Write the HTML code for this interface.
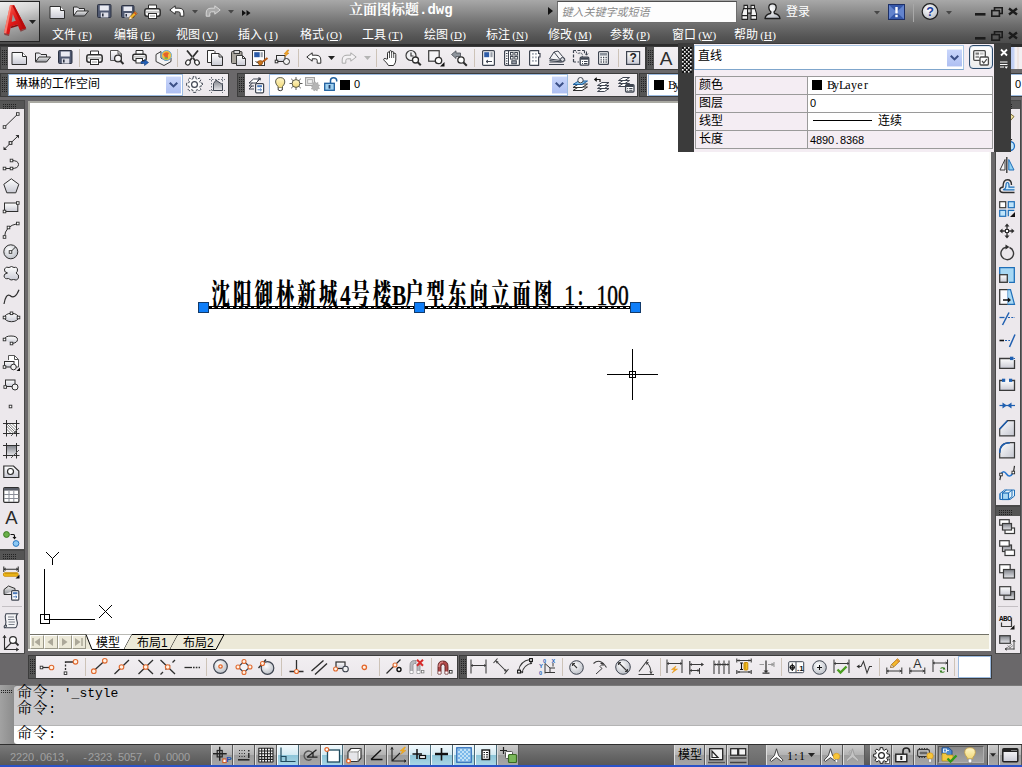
<!DOCTYPE html>
<html lang="zh"><head><meta charset="utf-8"><title>AutoCAD</title><style>
html,body{margin:0;padding:0}
html{background:#6a686a}
#root{left:0;top:0;width:1022px;height:767px}
body{width:1022px;height:767px;position:relative;overflow:hidden;background:#6a686a;font-family:"Liberation Sans","Noto Sans CJK SC",sans-serif;font-size:12px;color:#000}
div,span,svg{position:absolute;box-sizing:border-box}
svg{overflow:visible}
span{white-space:nowrap;line-height:1}
span b{display:inline-block;font-weight:normal;text-align:center;position:static}
.cj{letter-spacing:0.6px;font-size:15px;line-height:13px}
.tb{background:linear-gradient(#f2eff2,#ebe7eb);box-shadow:0 0 0 1px #3c3c3c}
.gh{background:#555;}
.gv{background-image:repeating-linear-gradient(0deg,#2a2a2a 0 1px,transparent 1px 2px),repeating-linear-gradient(90deg,#2a2a2a 0 1px,transparent 1px 2px);background-blend-mode:normal}
.mn{color:#fff;font-size:12px;font-family:"Liberation Sans","Noto Sans CJK SC",sans-serif}
.mn i{font-style:normal;font-family:"Liberation Serif",serif;font-size:11px;margin-left:2px}
.sep{background:#cdc3b8;width:1px}
.cmd{font-family:"Liberation Mono","Noto Serif CJK SC",monospace;font-size:13px;color:#000}
.sb{border-left:1px solid #dedede;border-right:1px solid #5a5a5a;background:linear-gradient(#cdcdcd,#b2b2b2 50%,#9d9d9d 52%,#a6a6a6)}
.sbon{border-left:1px solid #f4fbff;border-right:1px solid #4a6a78;background:linear-gradient(#f2f9fc,#d4ebf3 48%,#8ec6d9 52%,#a9d6e4)}
.qp{font-family:"Liberation Sans","Noto Sans CJK SC",sans-serif;font-size:12px}
</style></head><body><div id="root">
<svg width="0" height="0" style="left:0;top:0"><defs>
<linearGradient id="gL" x1="0" y1="0" x2="0" y2="1"><stop offset="0" stop-color="#ffffff"/><stop offset="1" stop-color="#c9cad4"/></linearGradient>
<linearGradient id="gL2" x1="0" y1="0" x2="1" y2="1"><stop offset="0" stop-color="#ffffff"/><stop offset="1" stop-color="#c4c6d0"/></linearGradient>
<linearGradient id="gD" x1="0" y1="0" x2="0" y2="1"><stop offset="0" stop-color="#f0f0f0"/><stop offset="1" stop-color="#8e9096"/></linearGradient>
<linearGradient id="gDr" x1="0" y1="0" x2="0" y2="1"><stop offset="0" stop-color="#7d8087"/><stop offset="1" stop-color="#e6e6ea"/></linearGradient>
<linearGradient id="gB" x1="0" y1="0" x2="0" y2="1"><stop offset="0" stop-color="#d8eefa"/><stop offset="1" stop-color="#8cc4e6"/></linearGradient>
<linearGradient id="gCb" x1="0" y1="0" x2="0" y2="1"><stop offset="0" stop-color="#c9d6fb"/><stop offset="1" stop-color="#aebff2"/></linearGradient>
<linearGradient id="gY" x1="0" y1="0" x2="0" y2="1"><stop offset="0" stop-color="#fff6c8"/><stop offset="1" stop-color="#f0d878"/></linearGradient>
<linearGradient id="gApp" x1="0" y1="0" x2="1" y2="1"><stop offset="0" stop-color="#ff6a5a"/><stop offset="0.5" stop-color="#e01818"/><stop offset="1" stop-color="#a80808"/></linearGradient>
<radialGradient id="gSph" cx="0.4" cy="0.35" r="0.7"><stop offset="0" stop-color="#ffffff"/><stop offset="1" stop-color="#b8bcc4"/></radialGradient>
</defs></svg>
<div style="left:0px;top:0px;width:1022px;height:44px;background:linear-gradient(#a8a8a8,#8e8e8e 25%,#6e6e6e 55%,#545454 85%,#4a4a4a)"></div>
<div style="left:0px;top:44px;width:1022px;height:3px;background:#2c2c2c"></div>
<div style="left:0px;top:1px;width:40px;height:41px;background:linear-gradient(165deg,#f0f0f0,#d4d4d4 30%,#a2a2a2 60%,#767676);border:1px solid #242424;border-left:none"></div>
<svg style="left:1px;top:3px" width="30" height="34" viewBox="0 0 30 34"><path d="M9 2L13 2L25 25L19 27.5L16.5 21.5L9.8 23.5L8.3 31.5L3 30Z" fill="url(#gApp)"/>
<path d="M9 2L10.6 2.4L5.2 30.6L3 30Z" fill="#ff9a8a" opacity=".75"/>
<path d="M11.8 11L14.8 17.8L10.6 19Z" fill="#9a9a9a"/>
<path d="M13 2L25 25L22.5 26L11.5 3Z" fill="#b80c0c"/>
<path d="M9.8 23.5L16.5 21.5L17.2 23L9.5 25.2Z" fill="#8e0a0a"/>
<path d="M3 30L8.3 31.5L8 33L3.5 32Z" fill="#7a0808" opacity=".6"/><path d="M19 27.5L25 25L25.3 26.2L19.6 28.8Z" fill="#7a0808" opacity=".6"/></svg>
<svg style="left:29px;top:20px" width="7" height="4" viewBox="0 0 7 4"><path d="M0 0H7L3.5 4Z" fill="#222"/></svg>
<svg style="left:49px;top:5px" width="17" height="15" viewBox="0 0 17 15"><path d="M1 1.5H11.5L15.5 5.5V13.5H1Z" fill="url(#gL)" stroke="#2e2e2e"/><path d="M11.5 1.5V5.5H15.5" fill="#fff" stroke="#2e2e2e"/></svg>
<svg style="left:72px;top:5px" width="18" height="13" viewBox="0 0 18 13"><path d="M1.5 10.5V2H5.5L7 3.5H12.5V6" fill="#e8e8ec" stroke="#2e2e2e"/><path d="M1.5 11L5 6H16.5L12.5 11Z" fill="url(#gD)" stroke="#2e2e2e"/></svg>
<svg style="left:97px;top:4px" width="15" height="14" viewBox="0 0 15 14"><rect x="0.5" y="0.5" width="13.5" height="13" rx="1" fill="#4f5870" stroke="#2c3242"/><rect x="2.8" y="1.5" width="9" height="5" fill="#e9eaf2"/><rect x="3.8" y="8.5" width="7.5" height="5" fill="#dcdde6"/><rect x="5" y="9.5" width="1.6" height="3" fill="#2c3242"/></svg>
<svg style="left:121px;top:5px" width="17" height="15" viewBox="0 0 17 15"><rect x="0.5" y="0.5" width="12.5" height="12" rx="1" fill="#4f5870" stroke="#2c3242"/><rect x="2.5" y="1.5" width="8.5" height="4.5" fill="#e9eaf2"/><rect x="3.5" y="8" width="7" height="4.5" fill="#dcdde6"/><rect x="4.5" y="9" width="1.5" height="2.6" fill="#2c3242"/><path d="M8 14.5L9 11.5L14 6.5L16 8.5L11 13.5Z" fill="#f2b52c" stroke="#7a4a10" stroke-width=".7"/><path d="M8 14.5L9 11.5L11 13.5Z" fill="#f6e6c8"/><path d="M13.2 7.3L15.2 9.3" stroke="#d04020" stroke-width="1.2"/></svg>
<svg style="left:144px;top:4px" width="17" height="15" viewBox="0 0 17 15"><path d="M4.5 5V1H12.5V5" fill="#fff" stroke="#2e2e2e"/><rect x="0.8" y="4.8" width="15.4" height="7.4" rx="2.2" fill="#f4f4f4" stroke="#2e2e2e" stroke-width="1.5"/><rect x="2" y="7" width="13" height="2" fill="#c8c8c8"/><rect x="4.5" y="9.5" width="8" height="5" fill="#fff" stroke="#2e2e2e"/><rect x="6" y="11.5" width="5" height="1" fill="#9a9a9a"/></svg>
<svg style="left:169px;top:5px" width="16" height="12" viewBox="0 0 16 12"><path d="M0.8 5L6.2 0.8V3.2H10Q14.8 3.2 14.8 8V11.2H11.2V8.6Q11.2 6.8 9.5 6.8H6.2V9.2Z" fill="#fff" stroke="#2e2e2e" stroke-linejoin="round"/></svg>
<svg style="left:205px;top:5px" width="16" height="12" viewBox="0 0 16 12"><g transform="translate(16 0) scale(-1 1)"><path d="M0.8 5L6.2 0.8V3.2H10Q14.8 3.2 14.8 8V11.2H11.2V8.6Q11.2 6.8 9.5 6.8H6.2V9.2Z" fill="#a9a9a9" stroke="#d6d6d6" stroke-linejoin="round"/></g></svg>
<svg style="left:192px;top:10px" width="6" height="4" viewBox="0 0 6 4"><path d="M0 0H6L3 3.5Z" fill="#474747"/></svg>
<svg style="left:228px;top:10px" width="6" height="4" viewBox="0 0 6 4"><path d="M0 0H6L3 3.5Z" fill="#474747"/></svg>
<svg style="left:242px;top:10px" width="9" height="6" viewBox="0 0 9 6"><path d="M0 0L4 3L0 6ZM4.5 0L8.5 3L4.5 6Z" fill="#111"/></svg>
<span style="left:349px;top:3px;color:#fff;font-weight:bold;font-size:14px;font-family:'Liberation Mono','Noto Serif CJK SC',serif">立面图标题.dwg</span>
<svg style="left:548px;top:7px" width="5" height="8" viewBox="0 0 5 8"><path d="M0 0L5 4L0 8Z" fill="#111"/></svg>
<div style="left:557px;top:1px;width:180px;height:22px;background:#fdfdfd;border:1px solid #6e6e6e;border-top-color:#4e4e4e"></div>
<span style="left:561px;top:7px;color:#8a8a8a;font-size:11px;transform:skewX(-14deg);transform-origin:0 100%">键入关键字或短语</span>
<svg style="left:741px;top:5px" width="17" height="15" viewBox="0 0 17 15"><g transform="translate(0 -2.7) scale(1 1.27)"><path d="M3 2.5H6.5V6H3ZM10 2.5H13.5V6H10Z" fill="#e8e8e8" stroke="#222"/><path d="M2.5 5L1 9V13.5H6.5V9L6.5 5ZM10 5V13.5H15.5V9L14 5Z" fill="#f4f4f4" stroke="#222"/><rect x="6.5" y="5" width="3.5" height="3.5" fill="#ccc" stroke="#222"/><path d="M1 10.5H6.5M10 10.5H15.5" stroke="#222"/></g></svg>
<svg style="left:764px;top:3px" width="18" height="17" viewBox="0 0 18 17"><path d="M1 15.5Q1.5 11.5 6.5 10.5L7 9Q4.8 7 4.8 4.5Q4.8 0.8 8.5 0.8Q12.2 0.8 12.2 4.5Q12.2 7 10 9L10.5 10.5Q15.5 11.5 16 15.5Z" fill="url(#gSph)" stroke="#1e1e1e" stroke-width="1.3" stroke-linejoin="round"/></svg>
<span style="left:786px;top:6px;color:#fff;font-size:12px">登录</span>
<svg style="left:874px;top:11px" width="6" height="4" viewBox="0 0 6 4"><path d="M0 0H6L3 3.5Z" fill="#474747"/></svg>
<svg style="left:888px;top:4px" width="17" height="16" viewBox="0 0 17 16"><rect x="0.5" y="0.5" width="16" height="15" fill="#3557a8" stroke="#1d2f66"/><path d="M1 1L8.5 8L1 15ZM16 1L8.5 8L16 15Z" fill="#6e8ed6" opacity=".8"/><rect x="7.3" y="3" width="2.4" height="6.5" fill="#fff"/><rect x="7.3" y="10.8" width="2.4" height="2.4" fill="#fff"/></svg>
<div style="left:913px;top:4px;width:1px;height:18px;background:#a8a8a8"></div>
<svg style="left:921px;top:3px" width="18" height="17" viewBox="0 0 18 17"><circle cx="9" cy="8.5" r="7.8" fill="url(#gSph)" stroke="#1e1e1e" stroke-width="1.2"/><text x="9" y="13" text-anchor="middle" font-family="'Liberation Sans',sans-serif" font-weight="bold" font-size="12.5" fill="#1c3f9e">?</text></svg>
<svg style="left:946px;top:11px" width="6" height="4" viewBox="0 0 6 4"><path d="M0 0H6L3 3.5Z" fill="#474747"/></svg>
<svg style="left:975px;top:13px" width="11" height="3" viewBox="0 0 11 3"><rect width="10.5" height="2.6" fill="#1c1c1c"/></svg>
<svg style="left:991px;top:7px" width="12" height="10" viewBox="0 0 12 10"><path d="M3.5 3V0.8H11.2V6.5H9" fill="none" stroke="#1c1c1c" stroke-width="1.6"/><rect x="0.8" y="3.6" width="7.6" height="5.6" fill="none" stroke="#1c1c1c" stroke-width="1.6"/></svg>
<svg style="left:1008px;top:8px" width="10" height="7" viewBox="0 0 10 7"><path d="M1 0.5L9 6.5M9 0.5L1 6.5" stroke="#1c1c1c" stroke-width="2.4"/></svg>
<svg style="left:975px;top:37px" width="11" height="3" viewBox="0 0 11 3"><rect width="10.5" height="2.6" fill="#1c1c1c"/></svg>
<svg style="left:991px;top:31px" width="12" height="10" viewBox="0 0 12 10"><path d="M3.5 3V0.8H11.2V6.5H9" fill="none" stroke="#1c1c1c" stroke-width="1.6"/><rect x="0.8" y="3.6" width="7.6" height="5.6" fill="none" stroke="#1c1c1c" stroke-width="1.6"/></svg>
<svg style="left:1008px;top:32px" width="10" height="7" viewBox="0 0 10 7"><path d="M1 0.5L9 6.5M9 0.5L1 6.5" stroke="#1c1c1c" stroke-width="2.4"/></svg>
<span class="mn" style="left:52px;top:29px;">文件<i><b style="width:4px">(</b><b style="min-width:6px;text-decoration:underline">F</b><b style="width:4px">)</b></i></span>
<span class="mn" style="left:114px;top:29px;">编辑<i><b style="width:4px">(</b><b style="min-width:6px;text-decoration:underline">E</b><b style="width:4px">)</b></i></span>
<span class="mn" style="left:176px;top:29px;">视图<i><b style="width:4px">(</b><b style="min-width:6px;text-decoration:underline">V</b><b style="width:4px">)</b></i></span>
<span class="mn" style="left:238px;top:29px;">插入<i><b style="width:4px">(</b><b style="min-width:6px;text-decoration:underline">I</b><b style="width:4px">)</b></i></span>
<span class="mn" style="left:300px;top:29px;">格式<i><b style="width:4px">(</b><b style="min-width:6px;text-decoration:underline">O</b><b style="width:4px">)</b></i></span>
<span class="mn" style="left:362px;top:29px;">工具<i><b style="width:4px">(</b><b style="min-width:6px;text-decoration:underline">T</b><b style="width:4px">)</b></i></span>
<span class="mn" style="left:424px;top:29px;">绘图<i><b style="width:4px">(</b><b style="min-width:6px;text-decoration:underline">D</b><b style="width:4px">)</b></i></span>
<span class="mn" style="left:486px;top:29px;">标注<i><b style="width:4px">(</b><b style="min-width:6px;text-decoration:underline">N</b><b style="width:4px">)</b></i></span>
<span class="mn" style="left:548px;top:29px;">修改<i><b style="width:4px">(</b><b style="min-width:6px;text-decoration:underline">M</b><b style="width:4px">)</b></i></span>
<span class="mn" style="left:610px;top:29px;">参数<i><b style="width:4px">(</b><b style="min-width:6px;text-decoration:underline">P</b><b style="width:4px">)</b></i></span>
<span class="mn" style="left:672px;top:29px;">窗口<i><b style="width:4px">(</b><b style="min-width:6px;text-decoration:underline">W</b><b style="width:4px">)</b></i></span>
<span class="mn" style="left:734px;top:29px;">帮助<i><b style="width:4px">(</b><b style="min-width:6px;text-decoration:underline">H</b><b style="width:4px">)</b></i></span>
<div class="tb" style="left:1px;top:47px;width:644px;height:22px;"></div>
<div class="gh" style="left:1px;top:47px;width:7px;height:22px;"></div>
<svg style="left:2px;top:50px" width="5" height="16" shape-rendering="crispEdges"><path d="M0.5 0V16M2.5 0V16M4.5 0V16" stroke="#222" stroke-dasharray="1 1"/></svg>
<svg style="left:11px;top:50px" width="17" height="16" viewBox="0 0 17 16"><g transform="translate(0 1)"><path d="M1 1.5H11.5L15.5 5.5V13.5H1Z" fill="url(#gL)" stroke="#2e2e2e"/><path d="M11.5 1.5V5.5H15.5" fill="#fff" stroke="#2e2e2e"/></g></svg>
<svg style="left:34px;top:50px" width="18" height="16" viewBox="0 0 18 16"><g transform="translate(0 1)"><path d="M1.5 10.5V2H5.5L7 3.5H12.5V6" fill="#e8e8ec" stroke="#2e2e2e"/><path d="M1.5 11L5 6H16.5L12.5 11Z" fill="url(#gD)" stroke="#2e2e2e"/></g></svg>
<svg style="left:58px;top:50px" width="15" height="16" viewBox="0 0 15 16"><rect x="0.5" y="0.5" width="13.5" height="13" rx="1" fill="#4f5870" stroke="#2c3242"/><rect x="2.8" y="1.5" width="9" height="5" fill="#e9eaf2"/><rect x="3.8" y="8.5" width="7.5" height="5" fill="#dcdde6"/><rect x="5" y="9.5" width="1.6" height="3" fill="#2c3242"/></svg>
<div class="sep" style="left:79px;top:49px;width:1px;height:18px;"></div>
<svg style="left:86px;top:50px" width="17" height="16" viewBox="0 0 17 16"><path d="M4.5 5V1H12.5V5" fill="#fff" stroke="#2e2e2e"/><rect x="0.8" y="4.8" width="15.4" height="7.4" rx="2.2" fill="#f4f4f4" stroke="#2e2e2e" stroke-width="1.5"/><rect x="2" y="7" width="13" height="2" fill="#c8c8c8"/><rect x="4.5" y="9.5" width="8" height="5" fill="#fff" stroke="#2e2e2e"/><rect x="6" y="11.5" width="5" height="1" fill="#9a9a9a"/></svg>
<svg style="left:110px;top:50px" width="15" height="16" viewBox="0 0 15 16"><path d="M0.5 0.5H8L11.5 4V10.5H0.5Z" fill="url(#gL)" stroke="#555"/><path d="M8 0.5V4H11.5" fill="none" stroke="#555"/><circle cx="8" cy="8.5" r="3.4" fill="#fff" fill-opacity=".8" stroke="#2e2e2e" stroke-width="1.3"/><path d="M10.5 11L13.5 14" stroke="#2e2e2e" stroke-width="2"/></svg>
<svg style="left:132px;top:50px" width="17" height="16" viewBox="0 0 17 16"><path d="M4 4.5V0.5H11V4.5" fill="#fff" stroke="#2e2e2e"/><rect x="0.8" y="4.3" width="13.4" height="6.4" rx="2" fill="#f4f4f4" stroke="#2e2e2e" stroke-width="1.4"/><rect x="2" y="6" width="11" height="1.6" fill="#c8c8c8"/><rect x="4" y="8.5" width="6.5" height="4.5" fill="#fff" stroke="#2e2e2e"/><path d="M9 11.5H12.5V9.5L16.5 12.5L12.5 15.5V13.5H9Z" fill="#1f5fb8" stroke="#103a78" stroke-width=".6"/></svg>
<svg style="left:155px;top:50px" width="18" height="16" viewBox="0 0 18 16"><path d="M1 4.5L6 1.5V8L11 10.5L16 8V11.5L9 15.5L1 11.5Z" fill="#f2f2f4" stroke="#3a3a3a"/><circle cx="11.5" cy="5.5" r="5" fill="#f3c23a" stroke="#6aa8d8" stroke-width="1"/><path d="M8 4Q11 1 14 3Q12 5 13 8Q10 9 8 4Z" fill="#e0522a" opacity=".85"/><path d="M9 8Q11 6 13 8.5Q11 10.5 9 8Z" fill="#58b85a" opacity=".8"/></svg>
<div class="sep" style="left:177px;top:49px;width:1px;height:18px;"></div>
<svg style="left:185px;top:50px" width="15" height="16" viewBox="0 0 15 16"><path d="M2 0.5L10.5 11M13 0.5L4.5 11" stroke="#2e2e2e" stroke-width="1.8"/><ellipse cx="3" cy="12.5" rx="2.2" ry="2.6" fill="#fff" stroke="#2e2e2e" stroke-width="1.2" transform="rotate(35 3 12.5)"/><ellipse cx="12" cy="12.5" rx="2.2" ry="2.6" fill="#fff" stroke="#2e2e2e" stroke-width="1.2" transform="rotate(-35 12 12.5)"/><circle cx="7.5" cy="7.5" r="0.9" fill="#999"/></svg>
<svg style="left:207px;top:50px" width="17" height="16" viewBox="0 0 17 16"><path d="M0.5 0.5H7L8 1.5V12.5H0.5Z" fill="#fdfdfd" stroke="#2e2e2e"/><path d="M4.5 3.5H12L15.5 7V15.5H4.5Z" fill="url(#gL)" stroke="#2e2e2e"/><path d="M12 3.5V7H15.5" fill="none" stroke="#2e2e2e"/></svg>
<svg style="left:231px;top:50px" width="16" height="16" viewBox="0 0 16 16"><rect x="0.5" y="1.5" width="10.5" height="12" rx="1" fill="#a8a49c" stroke="#3a3a3a"/><rect x="3" y="0.5" width="5.5" height="3" fill="#d8d8d8" stroke="#3a3a3a"/><path d="M5.5 5.5H11.5L14.5 8.5V15.5H5.5Z" fill="url(#gL)" stroke="#3a3a3a"/><path d="M11.5 5.5V8.5H14.5" fill="none" stroke="#3a3a3a"/></svg>
<svg style="left:252px;top:50px" width="17" height="16" viewBox="0 0 17 16"><rect x="0.5" y="0.5" width="12" height="15" fill="#fff" stroke="#3a3a3a"/><rect x="2.2" y="2.2" width="5.5" height="5" fill="#2a5aa8"/><rect x="8.6" y="2.2" width="2.2" height="5" fill="#9aa0aa"/><path d="M3.5 11.5L7 13.5" stroke="#3a3a3a"/><path d="M5.5 11.5Q8.5 9.5 11 11.5Q11 15 7.5 15.5Q6.5 13.5 5.5 11.5Z" fill="#c8741c" stroke="#7a3e08" stroke-width=".6"/><path d="M11 11.5L15.5 8" stroke="#b85a14" stroke-width="2"/></svg>
<svg style="left:275px;top:50px" width="17" height="16" viewBox="0 0 17 16"><rect x="1.5" y="5.5" width="8.5" height="6" fill="url(#gL)" stroke="#2e2e2e"/><rect x="0.2" y="10.2" width="2.6" height="2.6" fill="#fff" stroke="#2e2e2e"/><circle cx="11.5" cy="11.5" r="3" fill="#f2f2f2" stroke="#2e2e2e"/><path d="M12.5 0L9 4H11L9.5 7L14 3H12L14 0Z" fill="#f5a623" stroke="#c47a10" stroke-width=".5"/></svg>
<div class="sep" style="left:298px;top:49px;width:1px;height:18px;"></div>
<svg style="left:306px;top:52px" width="16" height="13" viewBox="0 0 16 13"><path d="M0.8 5L6.2 0.8V3.2H10Q14.8 3.2 14.8 8V11.2H11.2V8.6Q11.2 6.8 9.5 6.8H6.2V9.2Z" fill="#fff" stroke="#2e2e2e" stroke-linejoin="round"/></svg>
<svg style="left:328px;top:56px" width="7" height="4" viewBox="0 0 7 4"><path d="M0 0H7L3.5 4Z" fill="#222"/></svg>
<svg style="left:341px;top:52px" width="16" height="13" viewBox="0 0 16 13"><g transform="translate(16 0) scale(-1 1)"><path d="M0.8 5L6.2 0.8V3.2H10Q14.8 3.2 14.8 8V11.2H11.2V8.6Q11.2 6.8 9.5 6.8H6.2V9.2Z" fill="#f4f2f4" stroke="#ababab" stroke-linejoin="round"/></g></svg>
<svg style="left:364px;top:56px" width="7" height="4" viewBox="0 0 7 4"><path d="M0 0H7L3.5 4Z" fill="#b4b4b4"/></svg>
<div class="sep" style="left:376px;top:49px;width:1px;height:18px;"></div>
<svg style="left:383px;top:50px" width="16" height="16" viewBox="0 0 16 16"><path d="M4.5 9V3.2Q4.5 2 5.5 2Q6.5 2 6.5 3.2V1.8Q6.5 0.6 7.5 0.6Q8.6 0.6 8.6 1.8V2.6Q8.6 1.5 9.6 1.5Q10.7 1.5 10.7 2.8V4Q10.8 3.2 11.8 3.2Q12.8 3.2 12.8 4.5V10Q12.8 13 10.5 15.5H5.5Q4 13 1 10.2Q0.3 9.2 1.2 8.6Q2.2 8 3.2 9Z" fill="#fff" stroke="#2e2e2e" stroke-linejoin="round"/><path d="M6.5 3V8M8.6 2.6V8M10.7 4V8" stroke="#2e2e2e" stroke-width=".8"/></svg>
<svg style="left:405px;top:50px" width="17" height="16" viewBox="0 0 17 16"><circle cx="6" cy="5.5" r="5" fill="#f0f0f2" stroke="#3a3a3a" stroke-width="1.2"/><path d="M6 2.5V6H8.5" fill="none" stroke="#3a3a3a" stroke-width="1.2"/><circle cx="10.5" cy="10" r="3" fill="#fff" stroke="#2e2e2e" stroke-width="1.3"/><path d="M12.8 12.3L15.8 15.3" stroke="#2e2e2e" stroke-width="2"/></svg>
<svg style="left:428px;top:50px" width="17" height="16" viewBox="0 0 17 16"><rect x="0.7" y="0.7" width="10.5" height="10.5" fill="#f4f4f6" stroke="#3a3a3a" stroke-width="1.2"/><circle cx="10.5" cy="10.5" r="3.2" fill="#fff" stroke="#2e2e2e" stroke-width="1.3"/><path d="M16.5 12V16.5H12Z" fill="#111"/></svg>
<svg style="left:451px;top:50px" width="17" height="16" viewBox="0 0 17 16"><path d="M0.5 4.5L5 0.8V3H9.5V6.5H5V8.5Z" fill="#8e949c" stroke="#4a4e56" stroke-width=".8"/><circle cx="10" cy="10" r="3.2" fill="#fff" stroke="#2e2e2e" stroke-width="1.3"/><path d="M12.5 12.5L15.8 15.8" stroke="#2e2e2e" stroke-width="2"/></svg>
<div class="sep" style="left:474px;top:49px;width:1px;height:18px;"></div>
<svg style="left:482px;top:50px" width="13" height="16" viewBox="0 0 13 16"><rect x="0.6" y="0.6" width="11.8" height="14.8" rx="1" fill="#fff" stroke="#3e4450" stroke-width="1.2"/><rect x="2.2" y="2.2" width="5" height="5" fill="#2f5da8"/><rect x="8.4" y="2.2" width="2.2" height="5" fill="#9aa0aa"/><path d="M4 11.5H10M4 11.5L6 10M4 11.5L6 13" stroke="#3e4450" fill="none"/></svg>
<svg style="left:504px;top:50px" width="16" height="16" viewBox="0 0 16 16"><rect x="0.6" y="0.6" width="14.8" height="14.8" rx="1" fill="#fff" stroke="#3e4450" stroke-width="1.2"/><path d="M4.5 1V15" stroke="#3e4450"/><path d="M2 3.5H3.5M2 6H3.5M2 8.5H3.5M2 11H3.5M2 13.5H3.5" stroke="#3e4450" stroke-width="1.2"/><rect x="6.5" y="2.5" width="2.6" height="2.6" fill="none" stroke="#3e4450"/><rect x="10.8" y="2.5" width="2.6" height="2.6" fill="none" stroke="#3e4450"/><rect x="6.5" y="6.5" width="2.6" height="2.6" fill="none" stroke="#3e4450"/><rect x="10.8" y="6.5" width="2.6" height="2.6" fill="none" stroke="#3e4450"/><rect x="7.8" y="10.8" width="4.5" height="3" fill="#9aa0aa" stroke="#3e4450"/></svg>
<svg style="left:529px;top:50px" width="12" height="16" viewBox="0 0 12 16"><path d="M0.6 1.6Q0.6 0.6 1.6 0.6H9.6V3.5H11V7H9.6V15.4H1.6Q0.6 15.4 0.6 14.4Z" fill="#fff" stroke="#3e4450" stroke-width="1.2"/><path d="M3 3H4.8V4.8H3ZM6 3H7.8V4.8H6ZM3 6.5H4.8V8.3H3ZM6 6.5H7.8V8.3H6ZM3 10H4.8V11.8H3ZM6 10H7.8V11.8H6Z" fill="#a8aeb8"/></svg>
<svg style="left:549px;top:50px" width="17" height="16" viewBox="0 0 17 16"><path d="M0.5 9L5 2L9 1L13.5 6.5Q16.5 8 15.8 10.5Q15 12.5 12.5 12L0.5 12" fill="#f4f4f6" stroke="#3e4450"/><path d="M5 2L12.5 11.5M0.5 9L12 10.5M0.5 10.5L12.5 12" stroke="#3e4450" fill="none"/><circle cx="13.5" cy="9.5" r="2" fill="#d8dade" stroke="#3e4450"/><path d="M0 14.5H15" stroke="#3e4450"/></svg>
<svg style="left:573px;top:50px" width="17" height="16" viewBox="0 0 17 16"><path d="M0.5 0.5H3M4.5 0.5H7.5M9 0.5H11.5M11.5 0.5V3M0.5 0.5V3M0.5 4.5V7.5M0.5 9V12M0.5 12H3M4.5 12H6" stroke="#3e4450" stroke-width="1.2" fill="none"/><path d="M3 1.5Q4 4 6.5 3Q9 2.5 9.5 5Q10 7 8 7.5" fill="#e8e8ea" stroke="#3e4450" stroke-dasharray="2 1"/><path d="M13.5 1.5V5M12 3.5L13.5 5.2L15 3.5" stroke="#3e4450" fill="none"/><rect x="7.2" y="7.2" width="8.6" height="8" rx="1" fill="#fff" stroke="#3e4450" stroke-width="1.3"/><rect x="7.5" y="7.5" width="8" height="2.2" fill="#3e4450"/><path d="M9 11.5H10M11 11.5H14.5M9 13.5H10M11 13.5H14.5" stroke="#3e4450"/></svg>
<svg style="left:598px;top:50px" width="12" height="16" viewBox="0 0 12 16"><rect x="0.6" y="1.6" width="9.8" height="12.8" rx="1" fill="#fff" stroke="#3e4450" stroke-width="1.2"/><rect x="2" y="3" width="7" height="2.6" fill="#8c929c"/><path d="M2.5 7.5H3.8M5 7.5H6.3M7.5 7.5H8.8M2.5 9.8H3.8M5 9.8H6.3M7.5 9.8H8.8M2.5 12H3.8M5 12H6.3M7.5 12H8.8" stroke="#3e4450" stroke-width="1.3"/></svg>
<div class="sep" style="left:618px;top:49px;width:1px;height:18px;"></div>
<svg style="left:626px;top:50px" width="15" height="16" viewBox="0 0 15 16"><rect x="0.6" y="1.6" width="13" height="12.8" fill="url(#gL)" stroke="#3e4450" stroke-width="1.2"/><text x="7.2" y="12.3" text-anchor="middle" font-family="'Liberation Sans',sans-serif" font-weight="bold" font-size="12" fill="#222">?</text></svg>
<div class="tb" style="left:647px;top:47px;width:31px;height:22px;"></div>
<div class="gh" style="left:647px;top:47px;width:7px;height:22px;"></div>
<svg style="left:648px;top:50px" width="5" height="16" shape-rendering="crispEdges"><path d="M0.5 0V16M2.5 0V16M4.5 0V16" stroke="#222" stroke-dasharray="1 1"/></svg>
<svg style="left:657px;top:48px" width="18" height="18" viewBox="0 0 18 18"><text x="9" y="16.5" text-anchor="middle" font-family="'Liberation Sans',sans-serif" font-size="19" fill="#2e2e2e">A</text></svg>
<div class="tb" style="left:1px;top:74px;width:227px;height:22px;"></div>
<div class="gh" style="left:1px;top:74px;width:7px;height:22px;"></div>
<svg style="left:2px;top:77px" width="5" height="16" shape-rendering="crispEdges"><path d="M0.5 0V16M2.5 0V16M4.5 0V16" stroke="#222" stroke-dasharray="1 1"/></svg>
<div style="left:8px;top:74px;width:175px;height:22px;background:#fff;border:1px solid #9cbbe0;border-left-color:#7f9db9"></div>
<span style="left:16px;top:78px;font-size:12px">琳琳的工作空间</span>
<svg style="left:166px;top:76px" width="15" height="18" viewBox="0 0 16 18"><rect width="16" height="18" fill="url(#gCb)"/><path d="M4 6.5L8 10.5L12 6.5" stroke="#3b4f86" stroke-width="2.2" fill="none"/></svg>
<svg style="left:186px;top:76px" width="17" height="17" viewBox="0 0 17 17"><path d="M7.0 2.7L7.2 0.6L9.8 0.6L10.0 2.7L11.5 3.3L13.2 2.0L15.0 3.8L13.7 5.5L14.3 7.0L16.4 7.2L16.4 9.8L14.3 10.0L13.7 11.5L15.0 13.2L13.2 15.0L11.5 13.7L10.0 14.3L9.8 16.4L7.2 16.4L7.0 14.3L5.5 13.7L3.8 15.0L2.0 13.2L3.3 11.5L2.7 10.0L0.6 9.8L0.6 7.2L2.7 7.0L3.3 5.5L2.0 3.8L3.8 2.0L5.5 3.3Z" fill="#fafafa" stroke="#3e4450" stroke-linejoin="round" stroke-dasharray="3.2 1.2"/><circle cx="8.5" cy="8.5" r="2.9" fill="#fff" stroke="#3e4450" stroke-width="1.2"/></svg>
<svg style="left:209px;top:77px" width="17" height="17" viewBox="0 0 17 17"><path d="M2.5 0V16M13.5 0V16M0 2.5H16M0 13.5H16" stroke="#6a707a" stroke-dasharray="1.5 1.5"/><path d="M4.5 13.5V6.5L7 3.2L13.5 7.5V13.5Z" fill="url(#gDr)" stroke="#3e4450"/></svg>
<div class="tb" style="left:238px;top:74px;width:399px;height:22px;"></div>
<div class="gh" style="left:238px;top:74px;width:7px;height:22px;"></div>
<svg style="left:239px;top:77px" width="5" height="16" shape-rendering="crispEdges"><path d="M0.5 0V16M2.5 0V16M4.5 0V16" stroke="#222" stroke-dasharray="1 1"/></svg>
<svg style="left:248px;top:77px" width="17" height="17" viewBox="0 0 17 17"><path d="M1 6L5.5 2H12L8 6ZM1 9L4.5 6M1 12L4 9M1 9H6M1 12H6" fill="#fff" stroke="#3e4450"/><path d="M9.5 3.5L12 1.5M10 1H12.3V3.3" stroke="#3e4450" fill="none"/><rect x="7.6" y="6.6" width="8" height="9.2" rx="1" fill="#fff" stroke="#3e4450" stroke-width="1.2"/><rect x="9.2" y="8.2" width="4.8" height="2" fill="#4a78b8"/><path d="M9.5 12.8H13.5M12.2 11.5L13.5 12.8L12.2 14.1" stroke="#4a78b8" fill="none"/></svg>
<div style="left:269px;top:74px;width:299px;height:22px;background:#fff;border:1px solid #9cbbe0"></div>
<svg style="left:275px;top:77px" width="11" height="15" viewBox="0 0 11 15"><path d="M5.2 0.6Q9.8 0.6 9.8 5Q9.8 7 7.5 9.5V11H3V9.5Q0.6 7 0.6 5Q0.6 0.6 5.2 0.6Z" fill="url(#gY)" stroke="#5a5a4a"/><path d="M3.2 11V13Q5.2 14.5 7.3 13V11" fill="#fff" stroke="#3a3a3a"/></svg>
<svg style="left:289px;top:77px" width="14" height="14" viewBox="0 0 14 14"><path d="M7 0V13M0.5 6.5H13.5M2.2 1.8L11.8 11.2M11.8 1.8L2.2 11.2" stroke="#4a4a4a" stroke-width=".9"/><circle cx="7" cy="6.5" r="3.9" fill="url(#gY)" stroke="#5a5a4a"/></svg>
<svg style="left:305px;top:77px" width="15" height="14" viewBox="0 0 15 14"><rect x="0.6" y="0.6" width="8.8" height="7.8" fill="#f2f2f2" stroke="#a0a0a0" stroke-width="1.2"/><rect x="2.6" y="2.6" width="4.8" height="3.8" fill="none" stroke="#b0b0b0"/><path d="M10 4.5L11 6.3L13 5.5L12.8 7.6L14.8 8.3L13.4 9.8L14.5 11.6L12.5 11.9L12.2 13.9L10.4 12.9L9 14L8.3 12.2L6.3 12L7.3 10.2L6 8.6L8 8L8.2 6Z" fill="#b4b4b4" stroke="#9a9a9a" stroke-width=".5"/></svg>
<svg style="left:324px;top:77px" width="14" height="14" viewBox="0 0 14 14"><path d="M6.5 6.5V3.5Q6.5 0.7 9.5 0.7Q12.7 0.7 12.7 3.5V4.5" fill="none" stroke="#1f5f9e" stroke-width="1.5"/><rect x="0.7" y="6.3" width="9.6" height="7" fill="#9fd0f0" stroke="#1f5f9e" stroke-width="1.3"/><rect x="4.6" y="8" width="1.8" height="3.6" fill="#1f3f6e"/></svg>
<div style="left:340px;top:80px;width:10px;height:10px;background:#000"></div>
<span style="left:354px;top:79px;font-size:11px">0</span>
<svg style="left:552px;top:76px" width="15" height="18" viewBox="0 0 16 18"><rect width="16" height="18" fill="url(#gCb)"/><path d="M4 6.5L8 10.5L12 6.5" stroke="#3b4f86" stroke-width="2.2" fill="none"/></svg>
<svg style="left:572px;top:77px" width="17" height="16" viewBox="0 0 17 16"><path d="M1 13.5L6.5 10H15.5L10 13.5Z" fill="#fff" stroke="#2e2e2e"/><path d="M1 10.5L6.5 7H15.5L10 10.5Z" fill="#fff" stroke="#2e2e2e"/><path d="M1 7.5L6.5 4H15.5L10 7.5Z" fill="#7fc0ea" stroke="#1f5f9e"/><circle cx="8.5" cy="3.2" r="2.7" fill="#f4f4f6" stroke="#3e4450"/></svg>
<svg style="left:594px;top:77px" width="17" height="16" viewBox="0 0 17 16"><path d="M3.5 14.5L8 11.5H15L10.5 14.5ZM3.5 11.5L8 8.5H15L10.5 11.5ZM3.5 8.5L8 5.5H15L10.5 8.5Z" fill="#fff" stroke="#3e4450"/><path d="M6 5V2.5H1M2.8 0.8L0.8 2.5L2.8 4.2" fill="none" stroke="#111" stroke-width="1.2"/></svg>
<svg style="left:618px;top:77px" width="17" height="16" viewBox="0 0 17 16"><path d="M0.5 9.5L5 6.5H11.5L7 9.5ZM0.5 6.5L5 3.5H11.5L7 6.5ZM0.5 3.5L5 0.5H11.5L7 3.5Z" fill="#fff" stroke="#3e4450"/><rect x="7.6" y="7.6" width="8.4" height="7.4" rx="1" fill="#fff" stroke="#3e4450" stroke-width="1.3"/><rect x="8" y="8" width="7.6" height="2" fill="#3e4450"/><path d="M9.2 11.5H10.2M11.2 11.5H14.5M9.2 13.3H10.2M11.2 13.3H14.5" stroke="#3e4450"/></svg>
<div class="tb" style="left:640px;top:74px;width:382px;height:22px;"></div>
<div class="gh" style="left:640px;top:74px;width:7px;height:22px;"></div>
<svg style="left:641px;top:77px" width="5" height="16" shape-rendering="crispEdges"><path d="M0.5 0V16M2.5 0V16M4.5 0V16" stroke="#222" stroke-dasharray="1 1"/></svg>
<div style="left:648px;top:74px;width:120px;height:22px;background:#fff;border:1px solid #9cbbe0"></div>
<div style="left:654px;top:80px;width:10px;height:10px;background:#000"></div>
<span style="left:668px;top:79px;font-family:'Liberation Serif',serif;font-size:12px"><b style="width:6px">B</b><b style="width:6px">y</b></span>
<div style="left:1011px;top:47px;width:11px;height:22px;background:linear-gradient(90deg,#b9c9f0 0,#c8d4f4 3px,#f2eff2 4px,#f2eff2 6px,#e8d8d0 7px,#f2eff2 8px)"></div>
<div style="left:1011px;top:74px;width:11px;height:22px;background:#fff;border-top:1px solid #9cbbe0;border-bottom:1px solid #9cbbe0"></div>
<span style="left:1015px;top:79px;font-size:11px">0</span>
<div style="left:0px;top:101px;width:24px;height:448px;background:#ece8ec;box-shadow:0 0 0 1px #484848"></div>
<div class="gh" style="left:0px;top:101px;width:24px;height:8px;"></div>
<svg style="left:3px;top:104px" width="14" height="5" shape-rendering="crispEdges"><path d="M0 0.5H14M0 2.5H14M0 4.5H14" stroke="#222" stroke-dasharray="1 1"/></svg>
<div style="left:0px;top:551px;width:24px;height:102px;background:#ece8ec;box-shadow:0 0 0 1px #484848"></div>
<div class="gh" style="left:0px;top:551px;width:24px;height:9px;"></div>
<svg style="left:3px;top:554px" width="14" height="5" shape-rendering="crispEdges"><path d="M0 0.5H14M0 2.5H14M0 4.5H14" stroke="#222" stroke-dasharray="1 1"/></svg>
<svg style="left:3px;top:112px" width="17" height="17" viewBox="0 0 17 17"><path d="M1.5 15L14.8 2" stroke="#2e2e2e"/><rect x="0.19999999999999996" y="13.7" width="2.6" height="2.6" fill="#fff" stroke="#2e2e2e" stroke-width=".9"/><rect x="13.5" y="0.7" width="2.6" height="2.6" fill="#fff" stroke="#2e2e2e" stroke-width=".9"/></svg>
<svg style="left:3px;top:134px" width="17" height="17" viewBox="0 0 17 17"><path d="M1 15.5L15.5 1.5" stroke="#2e2e2e"/><path d="M0.5 16V12.5L4 16ZM16 1V4.5L12.5 1Z" fill="#2e2e2e"/><rect x="6.2" y="7.7" width="2.6" height="2.6" fill="#fff" stroke="#2e2e2e" stroke-width=".9"/><rect x="6.2" y="7.7" width="2.6" height="2.6" fill="#fff" stroke="#2e2e2e" stroke-width=".9"/></svg>
<svg style="left:3px;top:159px" width="17" height="12" viewBox="0 0 17 12"><path d="M1.5 9.5H8.5Q15.5 9.5 15.5 5.5Q15.5 1.5 8.5 1.5" fill="none" stroke="#2e2e2e"/><rect x="0.19999999999999996" y="8.2" width="2.6" height="2.6" fill="#fff" stroke="#2e2e2e" stroke-width=".9"/><rect x="7.2" y="8.2" width="2.6" height="2.6" fill="#fff" stroke="#2e2e2e" stroke-width=".9"/><rect x="7.2" y="0.19999999999999996" width="2.6" height="2.6" fill="#fff" stroke="#2e2e2e" stroke-width=".9"/></svg>
<svg style="left:3px;top:178px" width="17" height="16" viewBox="0 0 17 16"><path d="M8.3 0.8L15.8 6.3L12.8 14.8H3.8L0.8 6.3Z" fill="url(#gL)" stroke="#2e2e2e"/></svg>
<svg style="left:3px;top:201px" width="17" height="13" viewBox="0 0 17 13"><rect x="1.5" y="2" width="13.3" height="8.5" fill="url(#gL)" stroke="#2e2e2e"/><rect x="0.19999999999999996" y="9.2" width="2.6" height="2.6" fill="#fff" stroke="#2e2e2e" stroke-width=".9"/><rect x="13.5" y="0.7" width="2.6" height="2.6" fill="#fff" stroke="#2e2e2e" stroke-width=".9"/></svg>
<svg style="left:3px;top:222px" width="17" height="17" viewBox="0 0 17 17"><path d="M1.5 15Q2 4 14.8 1.5" fill="none" stroke="#2e2e2e"/><rect x="0.19999999999999996" y="13.7" width="2.6" height="2.6" fill="#fff" stroke="#2e2e2e" stroke-width=".9"/><rect x="4.2" y="4.2" width="2.6" height="2.6" fill="#fff" stroke="#2e2e2e" stroke-width=".9"/><rect x="13.5" y="0.19999999999999996" width="2.6" height="2.6" fill="#fff" stroke="#2e2e2e" stroke-width=".9"/></svg>
<svg style="left:3px;top:244px" width="16" height="16" viewBox="0 0 16 16"><circle cx="7.8" cy="7.8" r="7" fill="url(#gSph)" stroke="#2e2e2e"/><path d="M7.5 8L12.5 3" stroke="#2e2e2e"/><rect x="6.2" y="6.7" width="2.6" height="2.6" fill="#fff" stroke="#2e2e2e" stroke-width=".9"/></svg>
<svg style="left:3px;top:266px" width="17" height="16" viewBox="0 0 17 16"><path d="M4.5 7Q0.5 6 1.5 3Q3 0 6 1.5Q8.5 -0.5 11 1.5Q14.5 0.5 14.5 4Q14.5 6 13 7Q16.5 8.5 15.5 12Q14 15.5 10.5 13.5Q8 15 5.5 12.5Q1.5 13.5 1 10Q1 7.5 4.5 7Z" fill="url(#gL)" stroke="#2e2e2e"/></svg>
<svg style="left:3px;top:289px" width="17" height="16" viewBox="0 0 17 16"><path d="M1 15Q3 4 7 6.5Q12 11 16 0.8" fill="none" stroke="#2e2e2e" stroke-width="1.2"/></svg>
<svg style="left:3px;top:312px" width="17" height="11" viewBox="0 0 17 11"><ellipse cx="8.5" cy="5.5" rx="7" ry="4.2" fill="url(#gL)" stroke="#2e2e2e"/><rect x="0.19999999999999996" y="4.2" width="2.6" height="2.6" fill="#fff" stroke="#2e2e2e" stroke-width=".9"/><rect x="14.2" y="4.2" width="2.6" height="2.6" fill="#fff" stroke="#2e2e2e" stroke-width=".9"/><rect x="7.2" y="0.0" width="2.6" height="2.6" fill="#fff" stroke="#2e2e2e" stroke-width=".9"/></svg>
<svg style="left:3px;top:335px" width="16" height="11" viewBox="0 0 16 11"><path d="M1.5 4.5Q2 1 8 1Q14.5 1 14.5 4.5Q14.5 8 8.5 8.5" fill="url(#gL)" stroke="#2e2e2e"/><rect x="0.19999999999999996" y="3.2" width="2.6" height="2.6" fill="#fff" stroke="#2e2e2e" stroke-width=".9"/><rect x="7.2" y="7.2" width="2.6" height="2.6" fill="#fff" stroke="#2e2e2e" stroke-width=".9"/></svg>
<svg style="left:3px;top:355px" width="18" height="16" viewBox="0 0 18 16"><path d="M5.5 5V0.5H11.5L15.5 4.5V12H12" fill="#fff" stroke="#555"/><path d="M11.5 0.5V4.5H15.5" fill="none" stroke="#555"/><rect x="1.5" y="6.5" width="9.5" height="5.5" fill="url(#gL)" stroke="#2e2e2e"/><circle cx="10.5" cy="12" r="2.8" fill="#f2f2f2" stroke="#2e2e2e"/><rect x="0.19999999999999996" y="10.7" width="2.6" height="2.6" fill="#fff" stroke="#2e2e2e" stroke-width=".9"/><path d="M17 12.5V16H13.5Z" fill="#111"/></svg>
<svg style="left:3px;top:379px" width="17" height="12" viewBox="0 0 17 12"><rect x="2.5" y="1" width="9.5" height="6.5" fill="url(#gL)" stroke="#2e2e2e"/><circle cx="12" cy="8" r="3" fill="#f2f2f2" stroke="#2e2e2e"/><rect x="0.9000000000000001" y="6.7" width="2.6" height="2.6" fill="#fff" stroke="#2e2e2e" stroke-width=".9"/></svg>
<svg style="left:3px;top:400px" width="17" height="10" viewBox="0 0 17 10"><rect x="6.2" y="5.2" width="2.6" height="2.6" fill="#fff" stroke="#2e2e2e" stroke-width=".9"/></svg>
<svg style="left:3px;top:420px" width="17" height="17" viewBox="0 0 17 17"><rect x="3.5" y="3.5" width="10" height="10" fill="#fff" stroke="#2e2e2e"/><path d="M3.5 6L11 13.5M3.5 9L8 13.5M6 3.5L13.5 11M9 3.5L13.5 8M4 4L13 13" stroke="#555" stroke-width=".8"/><path d="M3.5 0V16.5M13.5 0V16.5M0 3.5H16.5M0 13.5H16.5" stroke="#2e2e2e"/><path d="M8 16L16 8" stroke="#555"/></svg>
<svg style="left:3px;top:443px" width="17" height="16" viewBox="0 0 17 16"><rect x="3.5" y="2.5" width="10" height="10" fill="url(#gDr)" stroke="#2e2e2e"/><path d="M3.5 0V15.5M13.5 0V15.5M0 2.5H16.5M0 12.5H16.5" stroke="#2e2e2e"/><path d="M8 15L16 7" stroke="#555"/></svg>
<svg style="left:3px;top:465px" width="17" height="14" viewBox="0 0 17 14"><path d="M0.8 1H10.5L15.8 6V12.5H0.8Z" fill="url(#gL)" stroke="#2e2e2e" stroke-width="1.2"/><circle cx="7.5" cy="6.5" r="3" fill="#fff" stroke="#2e2e2e" stroke-width="1.2"/></svg>
<svg style="left:3px;top:487px" width="17" height="16" viewBox="0 0 17 16"><rect x="0.7" y="0.7" width="15.2" height="14.6" rx="1" fill="#fff" stroke="#2e2e2e" stroke-width="1.2"/><rect x="1" y="1" width="14.6" height="2.6" fill="#5a5e68"/><path d="M1 7.5H15.5M1 11.5H15.5M6 4V15M10.8 4V15" stroke="#8a8e98"/></svg>
<svg style="left:3px;top:510px" width="17" height="15" viewBox="0 0 17 15"><text x="8.3" y="13.8" text-anchor="middle" font-family="'Liberation Sans',sans-serif" font-size="18.5" fill="#2a2a2a">A</text></svg>
<svg style="left:3px;top:531px" width="17" height="16" viewBox="0 0 17 16"><circle cx="3.5" cy="3.5" r="2.9" fill="#6ab04a" stroke="#3a7a22"/><circle cx="13" cy="12.5" r="2.9" fill="#8cc8f4" stroke="#2a78c0"/><path d="M7.5 3.5H10.5Q11.5 3.5 11.5 5V7" fill="none" stroke="#111" stroke-width="1.2"/><path d="M9.5 6L11.5 8.5L13.5 6Z" fill="#111"/></svg>
<svg style="left:3px;top:566px" width="17" height="13" viewBox="0 0 17 13"><path d="M0.8 0.5V6M15.2 0.5V6M1 3.2H15" stroke="#2e2e2e" fill="none" stroke-width="1.1"/><path d="M1 3.2L3 2M1 3.2L3 4.4M15 3.2L13 2M15 3.2L13 4.4" stroke="#2e2e2e" stroke-width=".8"/><rect x="0.6" y="6.8" width="14.5" height="3.4" rx="1" fill="#f7c21c" stroke="#c88a0a"/><path d="M3 7V8.5M5 7V8.5M7 7V8.5M9 7V8.5M11 7V8.5M13 7V8.5" stroke="#8a5a00" stroke-width=".6"/><path d="M16.5 8.5V12.5H12.5Z" fill="#111"/></svg>
<svg style="left:3px;top:585px" width="17" height="16" viewBox="0 0 17 16"><path d="M1 9.5V4.5L5.5 1L12 3.5V5" fill="url(#gD)" stroke="#2e2e2e"/><path d="M1 9.5H8" stroke="#2e2e2e"/><rect x="8.6" y="5.6" width="7.2" height="9.6" rx="1" fill="#fff" stroke="#3e4450" stroke-width="1.2"/><rect x="10" y="7.2" width="4.4" height="2" fill="#4a78b8"/><path d="M10.2 11.8H14M12.7 10.5L14 11.8L12.7 13.1" stroke="#4a78b8" fill="none"/></svg>
<svg style="left:3px;top:613px" width="17" height="16" viewBox="0 0 17 16"><path d="M3 0.8H14.5Q12.5 3 13.5 6Q15 10 14 12.5Q13.5 14.8 11.5 14.8H1.5Q0.5 13 2.5 12Q3.5 9.5 2.5 6.5Q1.5 3 3 0.8Z" fill="#f4f4f6" stroke="#3e4450" stroke-width="1.1"/><path d="M5 4H11M5 6.5H11.5M5.5 9H12M5.5 11.5H11.5" stroke="#7a808a"/><path d="M1.5 14.8Q4 14.5 3.5 12H2.5" fill="none" stroke="#3e4450"/></svg>
<svg style="left:3px;top:635px" width="17" height="16" viewBox="0 0 17 16"><path d="M1.5 0.5V14.5H15.5M1.5 14.5L8.5 7.5" fill="none" stroke="#2e2e2e" stroke-width="1.1"/><path d="M0 3L1.5 0.5L3 3M13 13L15.5 14.5L13 16" fill="none" stroke="#2e2e2e"/><circle cx="10" cy="5" r="3.4" fill="#fff" stroke="#2e2e2e" stroke-width="1.2"/><path d="M12.5 7.5L15.5 10.5" stroke="#2e2e2e" stroke-width="1.8"/></svg>
<div style="left:2px;top:606px;width:20px;height:1px;background:#c4c0c4"></div>
<div style="left:996px;top:101px;width:24px;height:404px;background:#ece8ec;box-shadow:0 0 0 1px #484848"></div>
<div class="gh" style="left:996px;top:101px;width:24px;height:8px;"></div>
<svg style="left:999px;top:104px" width="14" height="5" shape-rendering="crispEdges"><path d="M0 0.5H14M0 2.5H14M0 4.5H14" stroke="#222" stroke-dasharray="1 1"/></svg>
<div style="left:996px;top:507px;width:24px;height:146px;background:#ece8ec;box-shadow:0 0 0 1px #484848"></div>
<div class="gh" style="left:996px;top:507px;width:24px;height:9px;"></div>
<svg style="left:999px;top:510px" width="14" height="5" shape-rendering="crispEdges"><path d="M0 0.5H14M0 2.5H14M0 4.5H14" stroke="#222" stroke-dasharray="1 1"/></svg>
<svg style="left:999px;top:112px" width="17" height="16" viewBox="0 0 17 16"><path d="M2 12L11 1.5L15 4.5L6 15Z" fill="#f2e6a8" stroke="#7a6a2a"/><path d="M2 12L6 15L4.5 16H1Z" fill="#e8a0a0" stroke="#7a3a3a" stroke-width=".7"/></svg>
<svg style="left:999px;top:135px" width="17" height="16" viewBox="0 0 17 16"><circle cx="5.5" cy="5.5" r="4.5" fill="#fff" stroke="#2e2e2e"/><circle cx="11" cy="11" r="4.5" fill="#bfe4fa" stroke="#1f6fc0" stroke-width="1.3"/><path d="M8 2.5H11.5V5.5M10 4L11.5 5.8L13 4" stroke="#111" fill="none"/></svg>
<svg style="left:999px;top:157px" width="17" height="16" viewBox="0 0 17 16"><path d="M7.8 0V16" stroke="#2e2e2e" stroke-width="1.3"/><path d="M6 2.5V13H1Z" fill="#f4f4f6" stroke="#3a3a3a"/><path d="M9.8 2.5V13H15Z" fill="#8fd0f2" stroke="#1f6fb8"/></svg>
<svg style="left:999px;top:179px" width="17" height="15" viewBox="0 0 17 15"><path d="M15.5 13.5H4Q0.8 13.5 0.8 10.8Q0.8 8.5 4 8Q4 0.8 8.5 0.8Q12.5 0.8 12.5 6" fill="none" stroke="#2e2e2e" stroke-width="1.4"/><path d="M15.5 10.8H5Q3.8 10.8 5 10.2Q7 9.5 7 6.5Q7 3.5 8.5 3.5Q10 3.5 10 6.5V8.2H15.5" fill="#cfeafa" stroke="#1f6fb8" stroke-width="1.2"/></svg>
<svg style="left:999px;top:201px" width="17" height="17" viewBox="0 0 17 17"><rect x="0.7" y="0.7" width="6" height="6" fill="#fff" stroke="#3a3a3a" stroke-width="1.2"/><rect x="9.3" y="0.7" width="6" height="6" fill="#bfe4fa" stroke="#1f6fb8" stroke-width="1.2"/><rect x="0.7" y="9.3" width="6" height="6" fill="#bfe4fa" stroke="#1f6fb8" stroke-width="1.2"/><path d="M9.3 15.3V9.3H15.3" fill="#d8eefa" stroke="#1f6fb8" stroke-width="1.2"/><path d="M16 11V16H11Z" fill="#111"/></svg>
<svg style="left:999px;top:223px" width="17" height="17" viewBox="0 0 17 17"><path d="M8 0.5L10.5 3.5H5.5ZM8 15.5L10.5 12.5H5.5ZM0.5 8L3.5 5.5V10.5ZM15.5 8L12.5 5.5V10.5Z" fill="#2e2e2e"/><path d="M8 3V6M8 10V13M3 8H6M10 8H13" stroke="#2e2e2e" stroke-width="1.3"/><rect x="6.5" y="6.5" width="3" height="3" fill="#fff" stroke="#2e2e2e"/></svg>
<svg style="left:999px;top:244px" width="17" height="17" viewBox="0 0 17 17"><path d="M7 3.2A6.3 6.3 0 1 0 10.5 3.5" fill="none" stroke="#3a3a3a" stroke-width="1.4"/><path d="M6.5 0.5L10.5 3L6.5 5.5Z" fill="#2e2e2e"/></svg>
<svg style="left:999px;top:267px" width="17" height="16" viewBox="0 0 17 16"><path d="M0.7 7V0.7H15.3V15.3H10" fill="#a8d8f4" stroke="#1f6fb8" stroke-width="1.3"/><rect x="0.7" y="7.7" width="7.6" height="7.6" fill="url(#gL)" stroke="#3a3a3a" stroke-width="1.3"/></svg>
<svg style="left:999px;top:289px" width="17" height="16" viewBox="0 0 17 16"><path d="M8.5 0.7H11.5L15.5 15.3H8.5Z" fill="#a8d8f4" stroke="#1f6fb8" stroke-width="1.2"/><path d="M8.5 0.7H0.7V15.3H8.5" fill="#fbfbfd" stroke="#3a3a3a" stroke-width="1.3"/><path d="M4 11H10" stroke="#111" stroke-width="1.5"/><path d="M9 8.5L12 11L9 13.5Z" fill="#111"/></svg>
<svg style="left:999px;top:312px" width="17" height="14" viewBox="0 0 17 14"><path d="M0.5 5.5H5.5" stroke="#1f5fb0" stroke-width="1.3"/><path d="M9 5.5H16" stroke="#1f5fb0" stroke-width="1.1" stroke-dasharray="2 1.3"/><path d="M10 0.5L3.5 13" stroke="#1f5fb0" stroke-width="1.5"/></svg>
<svg style="left:999px;top:334px" width="17" height="14" viewBox="0 0 17 14"><path d="M0.5 6.5H5" stroke="#111" stroke-width="1.6"/><path d="M6 6.5H11" stroke="#1f5fb0" stroke-width="1.1" stroke-dasharray="2 1.3"/><path d="M16 0.5L10.5 13" stroke="#1f5fb0" stroke-width="1.5"/></svg>
<svg style="left:999px;top:356px" width="17" height="13" viewBox="0 0 17 13"><path d="M11 2.5H0.7V12.3H15.5V4" fill="url(#gL)" stroke="#3a3a3a" stroke-width="1.3"/><rect x="11" y="0.7" width="3.4" height="3.4" fill="#1f5fb0"/><path d="M14.4 2.5H16" stroke="#1f5fb0"/></svg>
<svg style="left:999px;top:378px" width="17" height="13" viewBox="0 0 17 13"><path d="M3 2.5H0.7V12.3H15.5V2.5H13" fill="url(#gL)" stroke="#3a3a3a" stroke-width="1.3"/><rect x="3" y="0.7" width="3.2" height="3.2" fill="#1f5fb0"/><rect x="10" y="0.7" width="3.2" height="3.2" fill="#1f5fb0"/></svg>
<svg style="left:999px;top:402px" width="17" height="8" viewBox="0 0 17 8"><path d="M0.5 3.5H16" stroke="#1f5fb0" stroke-width="1.2"/><path d="M3.5 0.6L7.8 3.5L3.5 6.4ZM12.5 0.6L8.2 3.5L12.5 6.4Z" fill="#1f5fb0"/></svg>
<svg style="left:999px;top:420px" width="17" height="17" viewBox="0 0 17 17"><path d="M0.7 15.8V9L8.5 0.7H15.5V15.8Z" fill="url(#gL2)" stroke="#3a3a3a" stroke-width="1.2"/><path d="M0.7 9L8.5 0.7" stroke="#1f5fb0" stroke-width="1.5"/></svg>
<svg style="left:999px;top:442px" width="17" height="17" viewBox="0 0 17 17"><path d="M0.7 15.8V11Q0.7 0.7 11 0.7H15.5V15.8Z" fill="url(#gL2)" stroke="#3a3a3a" stroke-width="1.2"/><path d="M0.7 11Q0.7 0.7 11 0.7" fill="none" stroke="#1f5fb0" stroke-width="1.5"/></svg>
<svg style="left:999px;top:465px" width="17" height="16" viewBox="0 0 17 16"><path d="M2 9Q4.5 4.5 7.5 9Q10.5 13.5 14 8" fill="none" stroke="#2a78d0" stroke-width="1.6"/><path d="M0.8 15L2 9.5M14.5 7L15.5 0.8" stroke="#2e2e2e" stroke-width="1.2"/><rect x="0.7" y="8.2" width="2.6" height="2.6" fill="#fff" stroke="#2e2e2e" stroke-width=".9"/><rect x="13.0" y="6.2" width="2.6" height="2.6" fill="#fff" stroke="#2e2e2e" stroke-width=".9"/></svg>
<svg style="left:999px;top:488px" width="17" height="13" viewBox="0 0 17 13"><path d="M1 5.5L5.5 2H15.5V8L11 11.5H1Z" fill="#e4f2fa" stroke="#1f6fb8"/><rect x="3.5" y="5" width="6" height="6.5" fill="#a8d8f4" stroke="#1f6fb8" stroke-width="1.2"/><path d="M3.5 5L7.5 2M9.5 5L13 2M9.5 11.5L13 8.5V2M1 5.5V11.5M15.5 2V8" stroke="#1f6fb8" fill="none"/></svg>
<svg style="left:999px;top:519px" width="17" height="16" viewBox="0 0 17 16"><rect x="0.7" y="0.7" width="9.5" height="5.5" fill="#fff" stroke="#3a3a3a" stroke-width="1.2"/><rect x="6" y="9" width="9.5" height="5.5" fill="#fff" stroke="#3a3a3a" stroke-width="1.2"/><rect x="3.5" y="4.5" width="9" height="6.5" fill="url(#gDr)" stroke="#3a3a3a" stroke-width="1.2"/></svg>
<svg style="left:999px;top:540px" width="17" height="17" viewBox="0 0 17 17"><rect x="3.5" y="5" width="9" height="6.5" fill="url(#gDr)" stroke="#3a3a3a" stroke-width="1.2"/><rect x="0.7" y="0.7" width="9.5" height="5.5" fill="#fff" stroke="#3a3a3a" stroke-width="1.2"/><rect x="6" y="10" width="9.5" height="5.5" fill="#fff" stroke="#3a3a3a" stroke-width="1.2"/></svg>
<svg style="left:999px;top:564px" width="17" height="15" viewBox="0 0 17 15"><rect x="0.7" y="0.7" width="10.5" height="8" fill="#fff" stroke="#3a3a3a" stroke-width="1.2"/><rect x="4.5" y="5.5" width="11" height="8.5" fill="url(#gDr)" stroke="#3a3a3a" stroke-width="1.2"/></svg>
<svg style="left:999px;top:586px" width="17" height="15" viewBox="0 0 17 15"><rect x="5" y="5.5" width="10.5" height="8" fill="url(#gDr)" stroke="#3a3a3a" stroke-width="1.2"/><rect x="0.7" y="0.7" width="11" height="8.5" fill="url(#gL)" stroke="#3a3a3a" stroke-width="1.2"/></svg>
<svg style="left:999px;top:615px" width="17" height="15" viewBox="0 0 17 15"><text x="0" y="6" font-family="'Liberation Mono',monospace" font-weight="bold" font-size="7.5" letter-spacing="-0.5" fill="#111">ABC</text><path d="M2.5 7.5V11.5H12.5V3H11" fill="none" stroke="#3a3a3a" stroke-width="1.2"/><path d="M15.5 10V14.5H11Z" fill="#111"/></svg>
<svg style="left:999px;top:635px" width="17" height="16" viewBox="0 0 17 16"><rect x="0.7" y="0.7" width="10.6" height="7.6" fill="url(#gDr)" stroke="#3a3a3a" stroke-width="1.2"/><path d="M6 14H15.5M15 5V14.5M13.8 7L15 5L16.2 7M8 12.8L6 14L8 15.2" stroke="#3a3a3a" fill="none" stroke-width=".9"/><path d="M8 13L13 9M10 13.5L14 10.5M8.5 10.5L12 13.5" stroke="#6a6a6a" stroke-width=".7"/></svg>
<div style="left:998px;top:606px;width:20px;height:1px;background:#c4c0c4"></div>
<div style="left:28px;top:101px;width:963px;height:550px;background:#fbfbf8"></div>
<div style="left:28px;top:101px;width:961px;height:548px;background:#a9a9a2"></div>
<div style="left:30px;top:103px;width:959px;height:546px;background:#ece9d8"></div>
<div style="left:30px;top:103px;width:959px;height:531px;background:#fff"></div>
<div style="left:30px;top:634px;width:959px;height:1px;background:#727268"></div>
<svg style="left:29px;top:103px" width="961" height="531" viewBox="29 103 961 531">
<g shape-rendering="crispEdges">
<line x1="204" y1="307.5" x2="636" y2="307.5" stroke="#000" stroke-width="3"/>
<line x1="212" y1="307.5" x2="630" y2="307.5" stroke="#fff" stroke-width="1" stroke-dasharray="3 3"/>
<rect x="198.5" y="302.5" width="10" height="10" fill="#0f7ef8" stroke="#123a6a"/>
<rect x="414.5" y="302.5" width="10" height="10" fill="#0f7ef8" stroke="#123a6a"/>
<rect x="630.5" y="302.5" width="10" height="10" fill="#0f7ef8" stroke="#123a6a"/>
<path d="M607 374.5H658M632.5 349V400" stroke="#000" fill="none"/>
<rect x="629.5" y="371.5" width="6" height="6" fill="none" stroke="#000"/>
<path d="M44.5 569V620M44 619.5H95" stroke="#000" fill="none"/>
<rect x="40.5" y="614.5" width="9" height="9" fill="none" stroke="#000"/>
</g>
<path d="M46 552L52.5 558.5L59 552M52.5 558.5V565" stroke="#000" fill="none"/>
<path d="M99 605L112 618M112 605L99 618" stroke="#000" fill="none"/>
<g font-family="'Liberation Serif','Noto Serif CJK SC',serif" font-size="29" fill="#000"><text transform="translate(220.55 304.5) scale(0.63 1.0)" text-anchor="middle" font-weight="900" stroke="#000" stroke-width="0">沈</text><text transform="translate(242.05 304.5) scale(0.63 1.0)" text-anchor="middle" font-weight="900" stroke="#000" stroke-width="0">阳</text><text transform="translate(263.55 304.5) scale(0.63 1.0)" text-anchor="middle" font-weight="900" stroke="#000" stroke-width="0">御</text><text transform="translate(285.05 304.5) scale(0.63 1.0)" text-anchor="middle" font-weight="900" stroke="#000" stroke-width="0">林</text><text transform="translate(306.55 304.5) scale(0.63 1.0)" text-anchor="middle" font-weight="900" stroke="#000" stroke-width="0">新</text><text transform="translate(328.05 304.5) scale(0.63 1.0)" text-anchor="middle" font-weight="900" stroke="#000" stroke-width="0">城</text><text transform="translate(345.38 304.5) scale(0.74 1.0)" text-anchor="middle" font-weight="700" stroke="#000" stroke-width="0">4</text><text transform="translate(360.30 304.5) scale(0.63 1.0)" text-anchor="middle" font-weight="900" stroke="#000" stroke-width="0">号</text><text transform="translate(381.80 304.5) scale(0.63 1.0)" text-anchor="middle" font-weight="900" stroke="#000" stroke-width="0">楼</text><text transform="translate(399.12 304.5) scale(0.74 1.0)" text-anchor="middle" font-weight="700" stroke="#000" stroke-width="0">B</text><text transform="translate(414.05 304.5) scale(0.63 1.0)" text-anchor="middle" font-weight="900" stroke="#000" stroke-width="0">户</text><text transform="translate(435.55 304.5) scale(0.63 1.0)" text-anchor="middle" font-weight="900" stroke="#000" stroke-width="0">型</text><text transform="translate(457.05 304.5) scale(0.63 1.0)" text-anchor="middle" font-weight="900" stroke="#000" stroke-width="0">东</text><text transform="translate(478.55 304.5) scale(0.63 1.0)" text-anchor="middle" font-weight="900" stroke="#000" stroke-width="0">向</text><text transform="translate(500.05 304.5) scale(0.63 1.0)" text-anchor="middle" font-weight="900" stroke="#000" stroke-width="0">立</text><text transform="translate(521.55 304.5) scale(0.63 1.0)" text-anchor="middle" font-weight="900" stroke="#000" stroke-width="0">面</text><text transform="translate(543.05 304.5) scale(0.63 1.0)" text-anchor="middle" font-weight="900" stroke="#000" stroke-width="0">图</text><text transform="translate(569.62 304.5) scale(0.74 1.0)" text-anchor="middle" font-weight="400" stroke="#000" stroke-width="0.5">1</text><text transform="translate(580.38 304.5) scale(0.74 1.0)" text-anchor="middle" font-weight="400" stroke="#000" stroke-width="0.5">:</text><text transform="translate(601.88 304.5) scale(0.74 1.0)" text-anchor="middle" font-weight="400" stroke="#000" stroke-width="0.5">1</text><text transform="translate(612.62 304.5) scale(0.74 1.0)" text-anchor="middle" font-weight="400" stroke="#000" stroke-width="0.5">0</text><text transform="translate(623.38 304.5) scale(0.74 1.0)" text-anchor="middle" font-weight="400" stroke="#000" stroke-width="0.5">0</text></g>
</svg>
<div style="left:30px;top:635px;width:14px;height:14px;background:#ece9d8;border:1px solid #fff;border-right-color:#9a9888;border-bottom-color:#9a9888"></div>
<svg style="left:32px;top:638px" width="10" height="8" viewBox="0 0 10 8"><path d="M1 0V8" stroke="#aca899" stroke-width="1.5"/><path d="M8 0V8L2.5 4Z" fill="#aca899"/></svg>
<div style="left:44px;top:635px;width:14px;height:14px;background:#ece9d8;border:1px solid #fff;border-right-color:#9a9888;border-bottom-color:#9a9888"></div>
<svg style="left:46px;top:638px" width="10" height="8" viewBox="0 0 10 8"><path d="M7 0V8L1.5 4Z" fill="#aca899"/></svg>
<div style="left:58px;top:635px;width:14px;height:14px;background:#ece9d8;border:1px solid #fff;border-right-color:#9a9888;border-bottom-color:#9a9888"></div>
<svg style="left:60px;top:638px" width="10" height="8" viewBox="0 0 10 8"><path d="M2 0V8L7.5 4Z" fill="#aca899"/></svg>
<div style="left:72px;top:635px;width:14px;height:14px;background:#ece9d8;border:1px solid #fff;border-right-color:#9a9888;border-bottom-color:#9a9888"></div>
<svg style="left:74px;top:638px" width="10" height="8" viewBox="0 0 10 8"><path d="M8 0V8" stroke="#aca899" stroke-width="1.5"/><path d="M1 0V8L6.5 4Z" fill="#aca899"/></svg>
<svg style="left:86px;top:634px" width="145" height="17" viewBox="0 0 145 17">
<path d="M0 0.5L6 15.5H38L46 0.5" fill="#fff" stroke="#000"/>
<path d="M38 15.5H84L92 0.5H46" fill="#ece9d8" stroke="#000"/>
<path d="M84 15.5H130L138 0.5H92" fill="#ece9d8" stroke="#000"/>
<text x="10" y="12.5" font-size="12" font-family="'Liberation Sans','Noto Sans CJK SC',sans-serif">模型</text>
<text x="51" y="12.5" font-size="12" font-family="'Liberation Sans','Noto Sans CJK SC',sans-serif">布局1</text>
<text x="97" y="12.5" font-size="12" font-family="'Liberation Sans','Noto Sans CJK SC',sans-serif">布局2</text>
</svg>
<div class="tb" style="left:29px;top:656px;width:428px;height:22px;"></div>
<div class="gh" style="left:29px;top:656px;width:7px;height:22px;"></div>
<svg style="left:30px;top:659px" width="5" height="16" shape-rendering="crispEdges"><path d="M0.5 0V16M2.5 0V16M4.5 0V16" stroke="#222" stroke-dasharray="1 1"/></svg>
<svg style="left:40px;top:659px" width="16" height="16" viewBox="0 0 16 16"><path d="M1 8.5H10" stroke="#2e2e2e" stroke-width="1.2"/><rect x="0.19999999999999996" y="7.2" width="2.6" height="2.6" fill="#fff" stroke="#2e2e2e" stroke-width=".9"/><circle cx="11.5" cy="8.5" r="2.3" fill="#fff3e6" stroke="#e06a30" stroke-width="1.1"/></svg>
<svg style="left:64px;top:659px" width="16" height="16" viewBox="0 0 16 16"><path d="M1.5 4V3H10" stroke="#2e2e2e" stroke-width="1.3" fill="none"/><path d="M1.5 5.5V12" stroke="#2e2e2e" stroke-width="1.3" stroke-dasharray="2 1.5"/><rect x="0.19999999999999996" y="12.899999999999999" width="2.6" height="2.6" fill="#fff" stroke="#2e2e2e" stroke-width=".9"/><circle cx="11.5" cy="2.8" r="2.3" fill="#fff3e6" stroke="#e06a30" stroke-width="1.1"/></svg>
<div class="sep" style="left:85px;top:658px;width:1px;height:18px;"></div>
<svg style="left:91px;top:658px" width="17" height="17" viewBox="0 0 17 17"><path d="M2.5 13L14 2.5" stroke="#2e2e2e" stroke-width="1.3"/><circle cx="2.8" cy="13.2" r="2.3" fill="#fff3e6" stroke="#e06a30" stroke-width="1.1"/><circle cx="13.8" cy="2.8" r="2.3" fill="#fff3e6" stroke="#e06a30" stroke-width="1.1"/></svg>
<svg style="left:114px;top:659px" width="16" height="16" viewBox="0 0 16 16"><path d="M0.5 15L15 1" stroke="#2e2e2e" stroke-width="1.3"/><circle cx="7.5" cy="8" r="2.3" fill="#fff3e6" stroke="#e06a30" stroke-width="1.1"/></svg>
<svg style="left:138px;top:659px" width="16" height="16" viewBox="0 0 16 16"><path d="M0.5 1L15 15M15 1L0.5 15" stroke="#2e2e2e" stroke-width="1.3"/><circle cx="7.7" cy="8" r="2.3" fill="#fff3e6" stroke="#e06a30" stroke-width="1.1"/></svg>
<svg style="left:160px;top:659px" width="16" height="16" viewBox="0 0 16 16"><path d="M0.5 1L15 15" stroke="#2e2e2e" stroke-width="1.3"/><path d="M15 1L12.5 3.5M10 6L5.5 10.5M3 13L0.5 15.5" stroke="#2e2e2e" stroke-width="1.3"/><circle cx="7.7" cy="8" r="2.3" fill="#fff3e6" stroke="#e06a30" stroke-width="1.1"/></svg>
<svg style="left:184px;top:659px" width="17" height="16" viewBox="0 0 17 16"><path d="M0.5 8.5H8" stroke="#2e2e2e" stroke-width="1.3"/><path d="M9 8.5H16" stroke="#2e2e2e" stroke-width="1.3" stroke-dasharray="1.6 1.2"/></svg>
<div class="sep" style="left:206px;top:658px;width:1px;height:18px;"></div>
<svg style="left:213px;top:659px" width="16" height="16" viewBox="0 0 16 16"><circle cx="7.5" cy="7.5" r="6.8" fill="url(#gSph)" stroke="#3e4450" stroke-width="1.2"/><circle cx="7.5" cy="7.5" r="1.7" fill="#fff3e6" stroke="#e2662a" stroke-width="1.3"/></svg>
<svg style="left:236px;top:659px" width="17" height="16" viewBox="0 0 17 16"><path d="M8 2.5L14 8L8 13.5L2 8Z" fill="#f4f4f6" stroke="#3e4450" stroke-width="1.2"/><circle cx="8" cy="2.5" r="2" fill="#fff3e6" stroke="#e06a30" stroke-width="1.1"/><circle cx="14" cy="8" r="2" fill="#fff3e6" stroke="#e06a30" stroke-width="1.1"/><circle cx="8" cy="13.5" r="2" fill="#fff3e6" stroke="#e06a30" stroke-width="1.1"/><circle cx="2" cy="8" r="2" fill="#fff3e6" stroke="#e06a30" stroke-width="1.1"/></svg>
<svg style="left:258px;top:659px" width="17" height="16" viewBox="0 0 17 16"><circle cx="9.5" cy="9" r="6.3" fill="url(#gSph)" stroke="#3e4450" stroke-width="1.2"/><path d="M0.5 9L8 0.5" stroke="#2e2e2e" stroke-width="1.3"/><circle cx="4.5" cy="4.5" r="2" fill="#fff3e6" stroke="#e06a30" stroke-width="1.1"/></svg>
<div class="sep" style="left:281px;top:658px;width:1px;height:18px;"></div>
<svg style="left:289px;top:660px" width="15" height="15" viewBox="0 0 15 15"><path d="M7.5 0V11M0.5 11.5H14.5" stroke="#2e2e2e" stroke-width="1.3"/><circle cx="7.5" cy="11.5" r="2" fill="#fff3e6" stroke="#e06a30" stroke-width="1.1"/></svg>
<svg style="left:311px;top:660px" width="17" height="15" viewBox="0 0 17 15"><path d="M0.5 11L12.5 0.5M4 14.5L16 3.5" stroke="#2e2e2e" stroke-width="1.4"/></svg>
<svg style="left:333px;top:661px" width="17" height="12" viewBox="0 0 17 12"><rect x="3" y="1" width="9" height="6.5" fill="url(#gL)" stroke="#2e2e2e" stroke-width="1.2"/><circle cx="12.5" cy="8" r="2.8" fill="#f2f2f2" stroke="#3e4450" stroke-width="1.1"/><circle cx="2.6" cy="8" r="2" fill="#fff3e6" stroke="#e06a30" stroke-width="1.1"/></svg>
<svg style="left:361px;top:664px" width="7" height="7" viewBox="0 0 7 7"><circle cx="3.3" cy="3.3" r="2.2" fill="#fff3e6" stroke="#e2662a" stroke-width="1.3"/></svg>
<div class="sep" style="left:379px;top:658px;width:1px;height:18px;"></div>
<svg style="left:386px;top:659px" width="16" height="16" viewBox="0 0 16 16"><path d="M0.5 14.5L14.5 0.5" stroke="#2e2e2e" stroke-width="1.3"/><circle cx="9" cy="6" r="2" fill="#fff3e6" stroke="#e06a30" stroke-width="1.1"/><circle cx="13" cy="10.5" r="2" fill="#fff" stroke="#111" stroke-width="1.4"/></svg>
<svg style="left:409px;top:659px" width="16" height="16" viewBox="0 0 16 16"><path d="M1 14.5V6.5Q1 1.5 5.5 1.5H7V4.5H5.5Q4 4.5 4 6.5V14.5ZM8 14.5V5H11V14.5Z" fill="#b8b8bc" stroke="#8a8a8e" stroke-width=".8"/><path d="M1.3 12H3.7V14.2H1.3ZM8.3 12H10.7V14.2H8.3Z" fill="#fff"/><path d="M8 0.8L14 6.8M14 0.8L8 6.8" stroke="#d62a2a" stroke-width="2"/><rect x="12.5" y="11.5" width="2.4" height="2.4" fill="#fff" stroke="#777" stroke-width=".8"/></svg>
<div class="sep" style="left:431px;top:658px;width:1px;height:18px;"></div>
<svg style="left:437px;top:660px" width="16" height="15" viewBox="0 0 16 15"><path d="M1 14V6.5Q1 1 6 1Q11 1 11 6.5V14H8V6.5Q8 4 6 4Q4 4 4 6.5V14Z" fill="#b04848" stroke="#5a2020" stroke-width=".9"/><path d="M2 7Q2 2 6 2" stroke="#e8a0a0" fill="none"/><path d="M1.3 11.5H3.7V13.7H1.3ZM8.3 11.5H10.7V13.7H8.3Z" fill="#fff"/><rect x="12.5" y="10.5" width="2.6" height="2.6" fill="#fff" stroke="#333" stroke-width=".9"/></svg>
<div class="tb" style="left:460px;top:656px;width:531px;height:22px;"></div>
<div class="gh" style="left:460px;top:656px;width:7px;height:22px;"></div>
<svg style="left:461px;top:659px" width="5" height="16" shape-rendering="crispEdges"><path d="M0.5 0V16M2.5 0V16M4.5 0V16" stroke="#222" stroke-dasharray="1 1"/></svg>
<svg style="left:470px;top:659px" width="17" height="15" viewBox="0 0 17 15"><path d="M1 0.5V14.5M16 0.5V14.5M1 6.5H16" stroke="#3a3a3a" fill="none" stroke-width="1.05"/><path d="M1 6.5L3 5.5M1 6.5L3 7.5M16 6.5L14 5.5M16 6.5L14 7.5" stroke="#3a3a3a" fill="none" stroke-width=".8"/></svg>
<svg style="left:493px;top:658px" width="17" height="17" viewBox="0 0 17 17"><path d="M4.5 0.5L0.5 5M15.5 11L11.5 16M3 3L13.5 13.5" stroke="#3a3a3a" fill="none" stroke-width="1.05"/><path d="M3 3L5.5 4M3 3L4 5.5M13.5 13.5L11 12.5M13.5 13.5L12.5 11" stroke="#3a3a3a" fill="none" stroke-width=".8"/></svg>
<svg style="left:517px;top:658px" width="17" height="17" viewBox="0 0 17 17"><path d="M1.5 13Q3 3 13 1.5" stroke="#3a3a3a" fill="none" stroke-width="1.05" stroke="#777"/><path d="M5 15Q6.5 7 15 5" stroke="#3a3a3a" fill="none" stroke-width="1.05"/><path d="M15.5 4.8L12.8 4L13.8 6.5ZM4.8 15.8L4 13L6.6 13.8Z" fill="#2e2e2e"/><rect x="0.6" y="12.2" width="2.8" height="2.8" fill="#fff" stroke="#111" stroke-width="1.1"/><rect x="12.6" y="0.6" width="2.8" height="2.8" fill="#fff" stroke="#111" stroke-width="1.1"/></svg>
<svg style="left:539px;top:658px" width="17" height="17" viewBox="0 0 17 17"><path d="M6 5.5V15.5M6 14.5H16M6 5.5L11 10H16M11 10V15M14 5V8.5" stroke="#3a3a3a" fill="none" stroke-width="1"/><text x="0" y="9.5" font-size="6" font-weight="bold" font-family="'Liberation Sans',sans-serif" fill="#1f5fb8">Y</text><text x="4" y="4.5" font-size="5.5" font-weight="bold" font-family="'Liberation Sans',sans-serif" fill="#1f5fb8">0</text><text x="0" y="16.5" font-size="5.5" font-weight="bold" font-family="'Liberation Sans',sans-serif" fill="#1f5fb8">0</text><text x="12.5" y="4.5" font-size="5.5" font-weight="bold" font-family="'Liberation Sans',sans-serif" fill="#1f5fb8">X</text></svg>
<div class="sep" style="left:562px;top:658px;width:1px;height:18px;"></div>
<svg style="left:569px;top:660px" width="16" height="15" viewBox="0 0 16 15"><circle cx="7.5" cy="7.5" r="6.8" fill="url(#gSph)" stroke="#3e4450" stroke-width="1"/><path d="M8 8L3.5 3.5M3.5 3.5H6M3.5 3.5V6" stroke="#3a3a3a" fill="none" stroke-width="1.1"/></svg>
<svg style="left:592px;top:659px" width="16" height="16" viewBox="0 0 16 16"><path d="M1.5 4.5Q8 -1.5 14.5 8.5" stroke="#3a3a3a" fill="none" stroke-width="1.05"/><path d="M4 15L10 9.5L8 7.5L11 4.5M11 4.5H8.5M11 4.5V7" stroke="#3a3a3a" fill="none" stroke-width="1"/></svg>
<svg style="left:615px;top:659px" width="17" height="17" viewBox="0 0 17 17"><circle cx="8" cy="8" r="7.3" fill="url(#gSph)" stroke="#3e4450" stroke-width="1"/><path d="M3.5 3.5L12.5 12.5M3.5 3.5H6M3.5 3.5V6M12.5 12.5H10M12.5 12.5V10" stroke="#3a3a3a" fill="none" stroke-width="1.1"/></svg>
<svg style="left:638px;top:659px" width="17" height="17" viewBox="0 0 17 17"><path d="M0.5 15.5H16M1 12.5L10 0.5" stroke="#3a3a3a" fill="none" stroke-width="1.05"/><path d="M8.5 3.5Q13 7 13 14.5" stroke="#3a3a3a" fill="none" stroke-width="1"/><path d="M8.5 3.5L10.8 3.8M8.5 3.5L9 6M13 14.5L11.8 12.5M13 14.5L14.2 12.5" stroke="#3a3a3a" fill="none" stroke-width=".9"/></svg>
<div class="sep" style="left:660px;top:658px;width:1px;height:18px;"></div>
<svg style="left:666px;top:659px" width="17" height="16" viewBox="0 0 17 16"><path d="M1 0.5V14M16 0.5V14M1 4.5H16" stroke="#3a3a3a" fill="none" stroke-width="1.05"/><path d="M1 4.5L3 3.5M1 4.5L3 5.5M16 4.5L14 3.5M16 4.5L14 5.5" stroke="#3a3a3a" fill="none" stroke-width=".8"/><path d="M10 7L5.5 10.5H8.5L6 14L11.5 10H8.5Z" fill="#f5a623" stroke="#e0900a" stroke-width=".5"/></svg>
<svg style="left:689px;top:659px" width="16" height="16" viewBox="0 0 16 16"><path d="M0.8 2V15.5" stroke="#3a3a3a" fill="none" stroke-width="1.2"/><path d="M1 5.5H14M1 11.5H10.5M10.5 9V15" stroke="#3a3a3a" fill="none" stroke-width="1"/><path d="M1 5.5L3 4.5M1 5.5L3 6.5M14.5 5.5L12.5 4.2V6.8ZM1 11.5L3 10.5M1 11.5L3 12.5M10.5 11.5L8.5 10.5M10.5 11.5L8.5 12.5" stroke="#3a3a3a" fill="#3a3a3a" stroke-width=".8"/></svg>
<svg style="left:713px;top:659px" width="17" height="16" viewBox="0 0 17 16"><path d="M1 1.5V15M6 1.5V15M11 1.5V15M16 1.5V15" stroke="#3a3a3a" fill="none" stroke-width="1.05"/><path d="M1 5.5H16" stroke="#3a3a3a" fill="none" stroke-width="1.1"/><path d="M2.5 4.5V6.5M4.5 4.5V6.5M7.5 4.5V6.5M9.5 4.5V6.5M12.5 4.5V6.5M14.5 4.5V6.5" stroke="#3a3a3a" fill="none" stroke-width=".8"/></svg>
<svg style="left:736px;top:658px" width="17" height="17" viewBox="0 0 17 17"><path d="M0.5 2.5H15.5M0.5 14H15.5M0.8 0.5V4.5M15.2 0.5V4.5M0.8 12V16M15.2 12V16M3 1.5V3.5M13 1.5V3.5M3 13V15M13 13V15" stroke="#3a3a3a" fill="none" stroke-width="1.1"/><path d="M5.5 4.5V12M4 5H7M4 11.5H7" stroke="#111" stroke-width="1.1" fill="none"/><rect x="8" y="4.5" width="3.8" height="7.5" rx=".8" fill="#f7c21c" stroke="#c88a0a"/><path d="M8.5 6H10M8.5 8H10M8.5 10H10" stroke="#8a5a00" stroke-width=".6"/></svg>
<svg style="left:759px;top:660px" width="16" height="15" viewBox="0 0 16 15"><path d="M7 0.5V11M3.5 13.2H10.5" stroke="#2e2e2e" stroke-width="1.2" fill="none"/><path d="M4.5 10.5H9.5L7 13Z" fill="#2e2e2e"/><path d="M0.5 4.5H5M9 4.5H15M15 2V7M12.5 3.3L14.5 4.5L12.5 5.7" stroke="#9a9a9a" stroke-width="1.1" fill="none"/></svg>
<div class="sep" style="left:781px;top:658px;width:1px;height:18px;"></div>
<svg style="left:788px;top:661px" width="17" height="13" viewBox="0 0 17 13"><rect x="0.7" y="0.7" width="15" height="11" rx="1" fill="#fff" stroke="#3e4450" stroke-width="1"/><path d="M8 1V11.5" stroke="#3e4450"/><circle cx="4.3" cy="6.2" r="2" fill="none" stroke="#111" stroke-width="1.1"/><path d="M4.3 2.5V10M1.5 6.2H7" stroke="#111" stroke-width="1.1"/><text x="9" y="10" font-size="8" font-weight="bold" font-family="'Liberation Sans',sans-serif" fill="#111">.1</text></svg>
<svg style="left:812px;top:660px" width="16" height="16" viewBox="0 0 16 16"><circle cx="7.5" cy="7.5" r="6.8" fill="url(#gSph)" stroke="#3e4450" stroke-width="1"/><path d="M7.5 5V10M5 7.5H10" stroke="#111" stroke-width="1.05"/></svg>
<svg style="left:833px;top:659px" width="17" height="16" viewBox="0 0 17 16"><path d="M1 0.5V14M16 0.5V14M1 4.5H16" stroke="#3a3a3a" fill="none" stroke-width="1.05"/><path d="M1 4.5L3 3.5M1 4.5L3 5.5M16 4.5L14 3.5M16 4.5L14 5.5" stroke="#3a3a3a" fill="none" stroke-width=".8"/><path d="M4.5 10.5L7.5 13.5L13.5 7.5" stroke="#4a9e20" stroke-width="2.4" fill="none"/></svg>
<svg style="left:856px;top:660px" width="17" height="15" viewBox="0 0 17 15"><path d="M1.5 6.5H5L7.5 1.5L11 13L13.5 6.5H16" stroke="#3a3a3a" fill="none" stroke-width="1.05"/><path d="M0.5 6.5L3.5 4.5V8.5Z" fill="#2e2e2e"/></svg>
<div class="sep" style="left:879px;top:658px;width:1px;height:18px;"></div>
<svg style="left:886px;top:658px" width="17" height="17" viewBox="0 0 17 17"><path d="M0.8 9.5V16M15.8 9.5V16M1 13H15.5" stroke="#3a3a3a" fill="none" stroke-width="1.05"/><path d="M1 13L3 12M1 13L3 14M15.5 13L13.5 12M15.5 13L13.5 14" stroke="#3a3a3a" fill="none" stroke-width=".8"/><path d="M4.5 9.5L5.5 6.5L11.5 0.8L13.8 3L8 8.8Z" fill="#f5b82c" stroke="#a86a10" stroke-width=".8"/><path d="M4.5 9.5L5.5 6.5L8 8.8Z" fill="#f6e6c8" stroke="#7a5a2a" stroke-width=".5"/><path d="M10.5 1.8L12.8 4" stroke="#d8703a" stroke-width="1"/></svg>
<svg style="left:909px;top:658px" width="17" height="17" viewBox="0 0 17 17"><path d="M0.8 9.5V16M15.8 9.5V16M1 13H15.5" stroke="#3a3a3a" fill="none" stroke-width="1.05"/><path d="M1 13L3 12M1 13L3 14M15.5 13L13.5 12M15.5 13L13.5 14" stroke="#3a3a3a" fill="none" stroke-width=".8"/><text x="8.3" y="9.5" text-anchor="middle" font-family="'Liberation Sans',sans-serif" font-size="12.5" fill="#2e2e2e">A</text></svg>
<svg style="left:932px;top:659px" width="17" height="15" viewBox="0 0 17 15"><path d="M1 0.5V13M15.5 0.5V13M1 4H15.5" stroke="#3a3a3a" fill="none" stroke-width="1.05"/><path d="M1 4L3 3M1 4L3 5M15.5 4L13.5 3M15.5 4L13.5 5" stroke="#3a3a3a" fill="none" stroke-width=".8"/><path d="M8.5 9.5A2.5 2.5 0 0 1 12.5 10M12.5 12.5A2.5 2.5 0 0 1 8.5 12" stroke="#2f7a1a" stroke-width="1.05" fill="none"/><path d="M12 8L13.5 10.5L10.8 10.5ZM9 14.2L7.5 11.5L10.2 11.5Z" fill="#2f7a1a"/></svg>
<div class="sep" style="left:954px;top:658px;width:1px;height:18px;"></div>
<div style="left:958px;top:656px;width:33px;height:22px;background:#fff;border:1px solid #9cbbe0"></div>
<div style="left:0px;top:685px;width:1022px;height:60px;background:#7a7a7a"></div>
<div style="left:0px;top:685px;width:15px;height:60px;background:linear-gradient(90deg,#a2a2a2,#8a8a8a)"></div>
<svg style="left:1px;top:690px" width="11" height="3" shape-rendering="crispEdges"><path d="M0 0.5H11M0 2.5H11" stroke="#222" stroke-dasharray="1 1"/></svg>
<div style="left:14px;top:686px;width:1008px;height:40px;background:#cccbcd;border-top-left-radius:3px"></div>
<div style="left:14px;top:725px;width:1008px;height:1px;background:#b4b4b4"></div>
<div style="left:14px;top:726px;width:1008px;height:18px;background:#fff;border-bottom-left-radius:3px"></div>
<span class="cmd" style="left:17px;top:687px;"><span class='cj' style='position:static'>命令</span>: '_style</span>
<span class="cmd" style="left:17px;top:703px;"><span class='cj' style='position:static'>命令</span>:</span>
<span class="cmd" style="left:17px;top:728px;"><span class='cj' style='position:static'>命令</span>:</span>
<div style="left:0px;top:744px;width:1022px;height:1px;background:#2e2e2e"></div>
<div style="left:0px;top:745px;width:1022px;height:20px;background:linear-gradient(#7a7a7a,#686868 50%,#595959)"></div>
<div style="left:0px;top:765px;width:1022px;height:2px;background:#2a52c8"></div>
<span style="left:10px;top:752px;color:#a0a0a0;font-size:11px"><b style="width:6px">2</b><b style="width:6px">2</b><b style="width:6px">2</b><b style="width:6px">0</b><b style="width:6px">.</b><b style="width:6px">0</b><b style="width:6px">6</b><b style="width:6px">1</b><b style="width:6px">3</b><b style="width:6px">,</b><b style="width:6px">&nbsp;</b><b style="width:6px">&nbsp;</b><b style="width:6px">-</b><b style="width:6px">2</b><b style="width:6px">3</b><b style="width:6px">2</b><b style="width:6px">3</b><b style="width:6px">.</b><b style="width:6px">5</b><b style="width:6px">0</b><b style="width:6px">5</b><b style="width:6px">7</b><b style="width:6px">,</b><b style="width:6px">&nbsp;</b><b style="width:6px">0</b><b style="width:6px">.</b><b style="width:6px">0</b><b style="width:6px">0</b><b style="width:6px">0</b><b style="width:6px">0</b></span>
<div class="sb" style="left:211px;top:745px;width:22px;height:20px;"></div>
<svg style="left:214px;top:747px" width="18" height="17" viewBox="0 0 18 17"><path d="M5.7 -0.3V13.8M-1 6.7H12.7" stroke="#222" stroke-width="1.4"/><rect x="3.2" y="3.5" width="5" height="6.4" fill="none" stroke="#222" stroke-width="1.2"/><rect x="8.8" y="12" width="3.4" height="3.6" fill="#fff" stroke="#d05a20" stroke-width="1.1"/><text x="12.3" y="14.5" font-size="8" font-weight="bold" font-family="'Liberation Sans',sans-serif" fill="#1f4fb0">P</text></svg>
<div class="sb" style="left:233px;top:745px;width:22px;height:20px;"></div>
<svg style="left:236px;top:747px" width="16" height="16" viewBox="0 0 16 16"><path d="M3 3.5H10.5M3 6.5H10.5M3 9.5H10.5" stroke="#333" stroke-width="1.1" stroke-dasharray="1 1.5"/><path d="M2 12.8H13.5" stroke="#222" stroke-width="1.5"/><path d="M12.8 3V4.5M12.8 6V11" stroke="#222" stroke-width="1.4"/></svg>
<div class="sb" style="left:255px;top:745px;width:22px;height:20px;"></div>
<svg style="left:258px;top:747px" width="16" height="16" viewBox="0 0 16 16"><rect x="0.5" y="1" width="14.5" height="14" fill="#fff"/><path d="M0.8 1V15M3.7 1V15M6.6 1V15M9.5 1V15M12.4 1V15M15 1V15M0.5 1.2H15.2M0.5 4H15.2M0.5 6.8H15.2M0.5 9.6H15.2M0.5 12.4H15.2M0.5 15H15.2" stroke="#222" stroke-width="1.1"/></svg>
<div class="sbon" style="left:277px;top:745px;width:22px;height:20px;"></div>
<svg style="left:280px;top:747px" width="16" height="16" viewBox="0 0 16 16"><path d="M1 0.5V14.5H15.5M1 9.5H6V14.5" fill="none" stroke="#1f4a5e" stroke-width="1.2"/></svg>
<div class="sb" style="left:299px;top:745px;width:22px;height:20px;"></div>
<svg style="left:302px;top:747px" width="16" height="16" viewBox="0 0 16 16"><path d="M9.5 12.3A4.6 4.6 0 1 1 10.5 6" fill="none" stroke="#555" stroke-width="1.3"/><path d="M5 10.2L14.5 2.8M5 10.2H15.5M11 5.5V10" fill="none" stroke="#222" stroke-width="1.3"/></svg>
<div class="sbon" style="left:321px;top:745px;width:22px;height:20px;"></div>
<svg style="left:324px;top:747px" width="16" height="16" viewBox="0 0 16 16"><rect x="3.5" y="3" width="12" height="12" fill="#fff" stroke="#1f4a5e" stroke-width="1.3"/><circle cx="2.8" cy="2.5" r="1.9" fill="#fff" stroke="#e2662a" stroke-width="1.2"/></svg>
<div class="sb" style="left:343px;top:745px;width:22px;height:20px;"></div>
<svg style="left:346px;top:747px" width="16" height="16" viewBox="0 0 16 16"><path d="M2 5L5 1.5H15V11L12 14.5H2Z" fill="#fff" stroke="#333" stroke-width="1.2" stroke-linejoin="round"/><path d="M2 5Q2 5 12 5V14.5M12 5L15 1.5" fill="none" stroke="#888"/><rect x="3" y="6" width="8" height="7.5" fill="#e6e6ea"/><circle cx="2.5" cy="14" r="1.9" fill="#fff" stroke="#e2662a" stroke-width="1.3"/></svg>
<div class="sb" style="left:365px;top:745px;width:22px;height:20px;"></div>
<svg style="left:368px;top:747px" width="16" height="16" viewBox="0 0 16 16"><path d="M3 12.5H14.5M3 12.5L13 3" stroke="#111" stroke-width="1.4" fill="none"/></svg>
<div class="sb" style="left:387px;top:745px;width:22px;height:20px;"></div>
<svg style="left:390px;top:747px" width="18" height="16" viewBox="0 0 18 16"><path d="M2 0.5V14H16M2 14L10 6" fill="none" stroke="#222" stroke-width="1.1"/><path d="M0.8 2.5L2 0.5L3.2 2.5M14 12.8L16 14L14 15.2" stroke="#222" fill="none"/><path d="M14.5 0L10 4H12.5L10.5 7.5L16 3.5H13.5L15.5 0Z" fill="#f5b020" stroke="#e0900a" stroke-width=".4"/></svg>
<div class="sbon" style="left:409px;top:745px;width:22px;height:20px;"></div>
<svg style="left:412px;top:747px" width="16" height="16" viewBox="0 0 16 16"><path d="M5 2V12M0.5 7H10" stroke="#111" stroke-width="1.5"/><rect x="7.5" y="8.5" width="6" height="3" fill="#fff" stroke="#111" stroke-width="1.2"/></svg>
<div class="sbon" style="left:431px;top:745px;width:22px;height:20px;"></div>
<svg style="left:434px;top:747px" width="16" height="16" viewBox="0 0 16 16"><path d="M1 7H14" stroke="#111" stroke-width="2.4"/><path d="M7.5 1V13.5" stroke="#111" stroke-width="1.6"/></svg>
<div class="sbon" style="left:453px;top:745px;width:22px;height:20px;"></div>
<svg style="left:456px;top:747px" width="16" height="16" viewBox="0 0 16 16"><rect x="0.8" y="0.8" width="14.4" height="14.4" fill="#bfe0f6" stroke="#2a6ab8" stroke-width="1.3"/><path d="M2 2h2v2h-2zM6 2h2v2h-2zM10 2h2v2h-2zM4 4h2v2h-2zM8 4h2v2h-2zM12 4h2v2h-2zM2 6h2v2h-2zM6 6h2v2h-2zM10 6h2v2h-2zM4 8h2v2h-2zM8 8h2v2h-2zM12 8h2v2h-2zM2 10h2v2h-2zM6 10h2v2h-2zM10 10h2v2h-2zM4 12h2v2h-2zM8 12h2v2h-2zM12 12h2v2h-2z" fill="#7ab8ea"/></svg>
<div class="sbon" style="left:475px;top:745px;width:22px;height:20px;"></div>
<svg style="left:478px;top:747px" width="16" height="16" viewBox="0 0 16 16"><rect x="4" y="3" width="7.5" height="9.5" fill="#fff" stroke="#111" stroke-width="1.4"/><path d="M5.5 5.5H7M8 5.5H10M5.5 7.7H7M8 7.7H10M5.5 10H7M8 10H10" stroke="#111" stroke-width="1.1"/></svg>
<div class="sb" style="left:497px;top:745px;width:22px;height:20px;"></div>
<svg style="left:500px;top:747px" width="18" height="17" viewBox="0 0 18 17"><path d="M3.5 0V7M0 3.5H7" stroke="#222" stroke-width="1.2"/><rect x="5.5" y="4.5" width="7" height="7" rx="1" fill="#fff" stroke="#555"/><rect x="8.5" y="7.5" width="8" height="8" rx="1" fill="#7ab85a" stroke="#3a6a22" stroke-width="1.2"/></svg>
<div class="sb" style="left:674px;top:745px;width:31px;height:20px;"></div>
<span style="left:678px;top:749px;color:#000;font-size:12px">模型</span>
<div class="sb" style="left:705px;top:745px;width:22px;height:20px;"></div>
<svg style="left:708px;top:748px" width="17" height="16" viewBox="0 0 17 16"><rect x="1.7" y="0.7" width="13" height="11" fill="#f4f4f4" stroke="#222" stroke-width="1.3"/><path d="M4 3V9.5H10Z" fill="none" stroke="#222" stroke-width="1.2"/><path d="M0 14.5H17" stroke="#555" stroke-width="1.4"/></svg>
<div class="sb" style="left:727px;top:745px;width:22px;height:20px;"></div>
<svg style="left:730px;top:748px" width="17" height="16" viewBox="0 0 17 16"><rect x="0.7" y="0.7" width="7" height="6.5" fill="#f4f4f4" stroke="#222" stroke-width="1.2"/><rect x="8.7" y="0.7" width="7" height="6.5" fill="#f4f4f4" stroke="#222" stroke-width="1.2"/><path d="M0 10H16.5M0 14.5H16.5" stroke="#444" stroke-width="1.4"/></svg>
<div style="left:749px;top:745px;width:17px;height:20px;background:linear-gradient(#7c7c7c,#6a6a6a)"></div>
<div class="sb" style="left:766px;top:745px;width:55px;height:20px;"></div>
<svg style="left:770px;top:748px" width="14" height="15" viewBox="0 0 14 15"><path d="M6.5 0.8L8.6 7.6L13 12.2L11.6 13.4L6.5 9.6L1.4 13.4L0 12.2L4.4 7.6Z" fill="#fff" stroke="#333" stroke-width=".9" stroke-linejoin="round"/></svg>
<span style="left:787px;top:750px;font-size:12px;font-family:'Liberation Serif',serif"><b style="width:6px">1</b><b style="width:6px">:</b><b style="width:6px">1</b></span>
<svg style="left:808px;top:753px" width="7" height="4" viewBox="0 0 7 4"><path d="M0 0H7L3.5 4Z" fill="#222"/></svg>
<div class="sb" style="left:821px;top:745px;width:22px;height:20px;"></div>
<svg style="left:824px;top:748px" width="18" height="16" viewBox="0 0 18 16"><path d="M6.5 0.8L8.6 7.6L13 12.2L11.6 13.4L6.5 9.6L1.4 13.4L0 12.2L4.4 7.6Z" fill="#fff" stroke="#333" stroke-width=".9" stroke-linejoin="round"/><circle cx="12.5" cy="8.5" r="3.2" fill="#f8c63a" stroke="#d89a1a" stroke-width=".7"/><rect x="11.3" y="11.5" width="2.4" height="3" fill="#fff" stroke="#888" stroke-width=".6"/></svg>
<div class="sb" style="left:843px;top:745px;width:22px;height:20px;"></div>
<svg style="left:846px;top:748px" width="18" height="16" viewBox="0 0 18 16"><path d="M6.5 0.8L8.6 7.6L13 12.2L11.6 13.4L6.5 9.6L1.4 13.4L0 12.2L4.4 7.6Z" fill="#c4c4c4" stroke="#9a9a9a" stroke-width=".9" stroke-linejoin="round"/><path d="M4.5 2L2.5 5H4.5L3 8" stroke="#aaa" fill="none"/></svg>
<div class="sb" style="left:870px;top:745px;width:22px;height:20px;"></div>
<svg style="left:873px;top:747px" width="17" height="17" viewBox="0 0 17 17"><path d="M7.0 2.7L7.2 0.6L9.8 0.6L10.0 2.7L11.5 3.3L13.2 2.0L15.0 3.8L13.7 5.5L14.3 7.0L16.4 7.2L16.4 9.8L14.3 10.0L13.7 11.5L15.0 13.2L13.2 15.0L11.5 13.7L10.0 14.3L9.8 16.4L7.2 16.4L7.0 14.3L5.5 13.7L3.8 15.0L2.0 13.2L3.3 11.5L2.7 10.0L0.6 9.8L0.6 7.2L2.7 7.0L3.3 5.5L2.0 3.8L3.8 2.0L5.5 3.3Z" fill="#fafafa" stroke="#222" stroke-linejoin="round" /><circle cx="8.5" cy="8.5" r="2.9" fill="#fff" stroke="#222" stroke-width="1.2"/><path d="M16.5 12V16.5H12Z" fill="#fff" stroke="#222" stroke-width=".6"/></svg>
<div class="sb" style="left:892px;top:745px;width:22px;height:20px;"></div>
<svg style="left:895px;top:747px" width="17" height="16" viewBox="0 0 17 16"><path d="M8 7.5V4Q8 1 11.2 1Q14.5 1 14.5 4V5.5" fill="none" stroke="#222" stroke-width="1.6"/><rect x="0.8" y="7.2" width="11" height="7.5" fill="#f4f4f4" stroke="#222" stroke-width="1.4"/><rect x="5.3" y="9" width="2" height="4" fill="#222"/></svg>
<div class="sb" style="left:914px;top:745px;width:22px;height:20px;"></div>
<svg style="left:917px;top:747px" width="18" height="17" viewBox="0 0 18 17"><rect x="0.7" y="2.7" width="11.6" height="6.6" rx="1" fill="#dcdcdc" stroke="#333" stroke-width="1.2"/><path d="M2.5 1V2.5M5 1V2.5M7.5 1V2.5M10 1V2.5M2.5 9.5V11M5 9.5V11M7.5 9.5V11" stroke="#333" stroke-width="1.2"/><rect x="2.5" y="4.5" width="8" height="3" fill="#666"/><circle cx="13" cy="9" r="3.2" fill="#f8c63a" stroke="#d89a1a" stroke-width=".7"/><rect x="11.8" y="12" width="2.4" height="3.2" fill="#fff" stroke="#888" stroke-width=".6"/></svg>
<div style="left:936px;top:745px;width:52px;height:20px;background:linear-gradient(#8e8e8e,#7a7a7a);border-left:1px solid #bbb;border-right:1px solid #444"></div>
<div style="left:938px;top:746px;width:46px;height:17px;background:linear-gradient(#8a8a8a,#a2a2a2);border:1px solid #5a5a5a;border-bottom-color:#b0b0b0;border-right-color:#b0b0b0"></div>
<svg style="left:941px;top:747px" width="18" height="16" viewBox="0 0 18 16"><path d="M1 8V0.8H8L11 3.8V8" fill="#4a8ad0" stroke="#1f4a8e"/><rect x="2.5" y="2" width="3" height="3" fill="none" stroke="#fff" stroke-width=".8"/><path d="M5.5 3.5H8" stroke="#fff" stroke-width=".8"/><path d="M1 14V6.5H5L6 8H12V14Z" fill="#f3c840" stroke="#a8861a" stroke-width=".7"/><path d="M6.5 11.5L9.5 14.5L15.5 8.5" stroke="#2f9a1a" stroke-width="2.3" fill="none"/></svg>
<svg style="left:964px;top:747px" width="13" height="16" viewBox="0 0 13 16"><path d="M6 0.7Q11.3 0.7 11.3 5.5Q11.3 8 8.8 10.5V12H3.2V10.5Q0.7 8 0.7 5.5Q0.7 0.7 6 0.7Z" fill="url(#gY)" stroke="#c8a040" stroke-width=".8"/><rect x="4.2" y="12" width="3.6" height="3.8" fill="#fff" stroke="#888" stroke-width=".6"/></svg>
<div class="sb" style="left:988px;top:745px;width:11px;height:20px;"></div>
<svg style="left:990px;top:753px" width="6" height="4" viewBox="0 0 7 4"><path d="M0 0H7L3.5 4Z" fill="#222"/></svg>
<div class="sb" style="left:999px;top:745px;width:23px;height:20px;"></div>
<svg style="left:1002px;top:748px" width="17" height="15" viewBox="0 0 17 15"><rect x="0.8" y="0.8" width="15" height="13" rx="1" fill="url(#gL)" stroke="#222" stroke-width="1.5"/><rect x="1" y="1" width="14.6" height="3" fill="#222"/><path d="M9.5 2.5H10.5M11.5 2.5H12.5M13.5 2.5H14.5" stroke="#ddd"/></svg>
<div style="left:678px;top:43px;width:333px;height:109px;background:#3b3b3b"></div>
<div style="left:694px;top:44px;width:300px;height:108px;background:#f4edf3"></div>
<svg style="left:682px;top:47px" width="9" height="26" ><defs><pattern id="chk" width="4" height="4" patternUnits="userSpaceOnUse"><rect x="2" width="1.6" height="1.6" fill="#f4f4f4"/><rect y="2" width="1.6" height="1.6" fill="#f4f4f4"/></pattern></defs><rect width="10" height="26" fill="#141414"/><rect width="10" height="26" fill="url(#chk)"/></svg>
<div style="left:694px;top:45px;width:270px;height:25px;background:#fff;border:1px solid #a9c6e4;border-bottom:1px solid #7fa6cc"></div>
<span class="qp" style="left:698px;top:50px;">直线</span>
<svg style="left:947px;top:48px" width="15" height="20" viewBox="0 0 16 18"><rect width="16" height="18" fill="url(#gCb)"/><path d="M4 6.5L8 10.5L12 6.5" stroke="#3b4f86" stroke-width="2.2" fill="none"/></svg>
<div style="left:969px;top:45px;width:24px;height:24px;background:linear-gradient(#ffffff,#ececec);border:1px solid #2d4c6c;border-radius:4px;box-shadow:inset 0 0 0 1px #dfe8f2"></div>
<svg style="left:973px;top:50px" width="17" height="16" viewBox="0 0 17 16"><rect x="0.7" y="0.7" width="11.6" height="9.6" rx="1" fill="#fff" stroke="#4a4a4a" stroke-width="1.3"/><rect x="2.5" y="2.5" width="3.5" height="2.2" fill="#7a7a7a"/><rect x="6.8" y="2.5" width="3.8" height="2.2" fill="#c4c4c4"/><rect x="2.5" y="5.8" width="3.5" height="2.2" fill="#9a9a9a"/><rect x="7" y="7" width="8.4" height="8" rx="1" fill="#fff" stroke="#4a4a4a" stroke-width="1.3"/><path d="M9 11L10.8 13L13.8 9.2" fill="none" stroke="#4a4a4a" stroke-width="1.2"/></svg>
<svg style="left:1000px;top:49px" width="8" height="7" viewBox="0 0 8 7"><path d="M1 0.5L7 6.5M7 0.5L1 6.5" stroke="#fff" stroke-width="1.8"/></svg>
<svg style="left:1000px;top:61px" width="8" height="8" viewBox="0 0 8 8"><path d="M0 1H7.5M0 3.5H7.5M0 6H4" stroke="#fff" stroke-width="1.2"/><path d="M4.5 5.5H8L6.2 7.8Z" fill="#fff"/></svg>
<div style="left:695px;top:76px;width:298px;height:73px;background:#fff;border:1px solid #9a9a9a"></div>
<div style="left:696px;top:77px;width:111px;height:17px;background:#f4edf3"></div>
<span class="qp" style="left:699px;top:79px;">颜色</span>
<div style="left:696px;top:95px;width:111px;height:17px;background:#f4edf3"></div>
<div style="left:695px;top:94px;width:298px;height:1px;background:#9a9a9a"></div>
<span class="qp" style="left:699px;top:97px;">图层</span>
<div style="left:696px;top:113px;width:111px;height:17px;background:#f4edf3"></div>
<div style="left:695px;top:112px;width:298px;height:1px;background:#9a9a9a"></div>
<span class="qp" style="left:699px;top:115px;">线型</span>
<div style="left:696px;top:131px;width:111px;height:17px;background:#f4edf3"></div>
<div style="left:695px;top:130px;width:298px;height:1px;background:#9a9a9a"></div>
<span class="qp" style="left:699px;top:133px;">长度</span>
<div style="left:807px;top:76px;width:1px;height:73px;background:#9a9a9a"></div>
<div style="left:808px;top:131px;width:184px;height:17px;background:#f4edf3"></div>
<div style="left:812px;top:80px;width:10px;height:10px;background:#000"></div>
<span style="left:827px;top:79px;font-family:'Liberation Serif',serif;font-size:12px"><b style="width:6px">B</b><b style="width:6px">y</b><b style="width:6px">L</b><b style="width:6px">a</b><b style="width:6px">y</b><b style="width:6px">e</b><b style="width:6px">r</b></span>
<span style="left:810px;top:98px;font-size:11px">0</span>
<div style="left:813px;top:120px;width:59px;height:1px;background:#000"></div>
<span class="qp" style="left:878px;top:115px;">连续</span>
<span style="left:810px;top:135px;font-size:11px"><b style="width:6px">4</b><b style="width:6px">8</b><b style="width:6px">9</b><b style="width:6px">0</b><b style="width:6px">.</b><b style="width:6px">8</b><b style="width:6px">3</b><b style="width:6px">6</b><b style="width:6px">8</b></span>
</div></body></html>
